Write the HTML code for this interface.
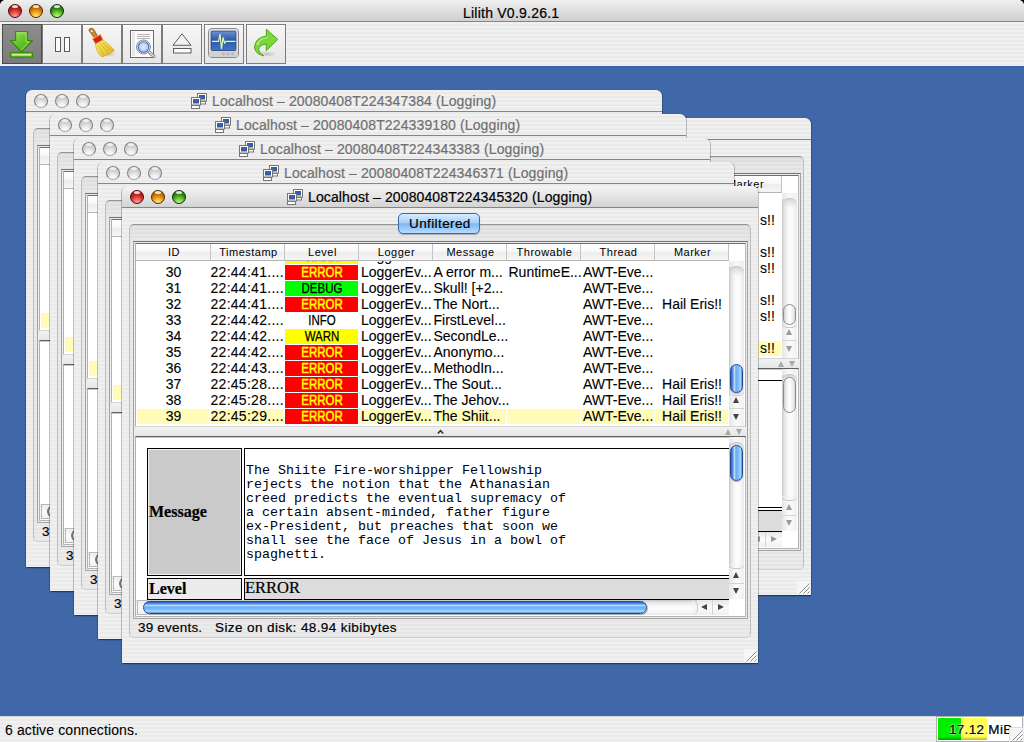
<!DOCTYPE html><html><head><meta charset="utf-8"><style>
*{box-sizing:border-box;margin:0;padding:0}
html,body{width:1024px;height:742px;overflow:hidden;background:#4068a8;font-family:'Liberation Sans',sans-serif;color:#000}
.a{position:absolute}
.stripe{background:repeating-linear-gradient(to bottom,#f0f0f0 0,#f0f0f0 2px,#eaeaea 2px,#eaeaea 4px)}
.t{position:absolute;white-space:pre;line-height:1;-webkit-text-stroke:0.2px currentColor}
.tl{position:absolute;width:14px;height:14px;border-radius:50%}
.tl.r{background:radial-gradient(ellipse 70% 75% at 50% 100%,#ffb0a8 0,#e8544c 55%,#b81c18 100%);border:1px solid #4a0808}
.tl.y{background:radial-gradient(ellipse 70% 75% at 50% 100%,#fff58a 0,#f4a828 55%,#c06a00 100%);border:1px solid #4a2a00}
.tl.g{background:radial-gradient(ellipse 70% 75% at 50% 100%,#d4ff98 0,#6cc830 55%,#2a8010 100%);border:1px solid #0a2a04}
.tl.i{background:radial-gradient(ellipse 70% 75% at 50% 100%,#ffffff 0,#f0f0f0 45%,#cdcdcd 100%);border:1px solid #7e7e7e;border-bottom-color:#a8a8a8}
.tl.i:after{content:'';position:absolute;left:3px;top:0px;width:6px;height:3px;border-radius:50%;background:rgba(255,255,255,0.7)}
.tl.r:after,.tl.y:after,.tl.g:after{content:'';position:absolute;left:3px;top:0px;width:6px;height:3px;border-radius:50%;background:rgba(255,255,255,0.8)}
.tb{position:absolute;top:24px;width:40px;height:40px;border:1px solid #7c7c7c;box-shadow:inset 0 1px 0 #fff;background:linear-gradient(#f6f6f6,#e6e6e6)}
.win{position:absolute;height:477px;border-radius:6px 6px 0 0;box-shadow:-1px 0 0 rgba(0,0,0,0.22),1px 0 0 rgba(0,0,0,0.22),0 1px 0 rgba(0,0,0,0.38),0 2px 1px rgba(0,0,0,0.12)}
.vtr{position:absolute;width:15px;background:linear-gradient(to right,#c4c4c4 0,#e2e2e2 2px,#f4f4f4 5px,#fdfdfd 8px,#f6f6f6 12px,#e8e8e8 15px)}
.htr{position:absolute;height:15px;background:linear-gradient(to bottom,#c4c4c4 0,#e2e2e2 2px,#f4f4f4 5px,#fdfdfd 8px,#f6f6f6 12px,#e8e8e8 15px)}
.kva{position:absolute;border-radius:7px;border:1px solid #23489a;background:linear-gradient(to right,#2a5fc4 0,#5d9be8 18%,#b8dcff 32%,#6eaaf0 45%,#7fc0fb 70%,#a8dcff 85%,#4f8ad8 100%);box-shadow:0 1px 1px rgba(0,0,0,0.3)}
.kha{position:absolute;border-radius:7px;border:1px solid #23489a;background:linear-gradient(to bottom,#2a5fc4 0,#5d9be8 18%,#b8dcff 32%,#6eaaf0 45%,#7fc0fb 70%,#a8dcff 85%,#4f8ad8 100%);box-shadow:1px 1px 1px rgba(0,0,0,0.3)}
.kvi{position:absolute;border-radius:7px;border:1px solid #8c8c8c;background:linear-gradient(to right,#d0d0d0 0,#f0f0f0 25%,#ffffff 50%,#f2f2f2 75%,#d8d8d8 100%)}
.khi{position:absolute;border-radius:7px;border:1px solid #8c8c8c;border-left:2px solid #707070;background:linear-gradient(to bottom,#d0d0d0 0,#f0f0f0 25%,#ffffff 50%,#f2f2f2 75%,#d8d8d8 100%)}
.arr{position:absolute;width:0;height:0;border-left:3.5px solid transparent;border-right:3.5px solid transparent}
.up{border-bottom:6px solid #444}
.in .up{border-bottom-color:#999}
.in .dn{border-top-color:#999}
.in .lf{border-right-color:#999}
.in .rt{border-left-color:#999}
.dn{border-top:6px solid #444}
.lf{position:absolute;width:0;height:0;border-top:3.5px solid transparent;border-bottom:3.5px solid transparent;border-right:6px solid #444}
.rt{position:absolute;width:0;height:0;border-top:3.5px solid transparent;border-bottom:3.5px solid transparent;border-left:6px solid #444}
.hd{position:absolute;top:60px;text-align:center;font-size:11px;letter-spacing:0.5px}
.rw{position:absolute;white-space:pre;line-height:1;font-size:14px;-webkit-text-stroke:0.1px currentColor}
</style></head><body>
<div class="a" style="left:0px;top:0px;width:1024px;height:21px;background:linear-gradient(#f0f0f0,#dedede 50%,#d0d0d0)"></div>
<svg class="a" style="left:0;top:0" width="1024" height="6"><path d="M0 0 H4 Q1 1 0 4 Z M1024 0 H1020 Q1023 1 1024 4 Z" fill="#000"/></svg>
<div class="a" style="left:0px;top:21px;width:1024px;height:1px;background:#858585"></div>
<div class="tl r" style="left:8px;top:4px"></div><div class="tl y" style="left:29px;top:4px"></div><div class="tl g" style="left:50px;top:4px"></div>
<div class="t" style="left:463px;top:5.5px;font-size:14px;letter-spacing:0.23px;">Lilith V0.9.26.1</div>
<div class="a" style="left:0px;top:22px;width:1024px;height:44px;background:repeating-linear-gradient(to bottom,#f0f0f0 0,#f0f0f0 2px,#eaeaea 2px,#eaeaea 4px)"></div>
<div class="a" style="left:0px;top:65px;width:1024px;height:1px;background:#f6f4ee"></div>
<div class="tb" style="left:2px;background:linear-gradient(#8c8c8c,#7c7c7c);border-color:#4a4a4a;box-shadow:none"></div>
<div class="tb" style="left:42px"></div>
<div class="tb" style="left:82px"></div>
<div class="tb" style="left:122px"></div>
<div class="tb" style="left:162px"></div>
<div class="tb" style="left:204px"></div>
<div class="tb" style="left:246px"></div>
<svg class="a" style="left:0;top:22px;z-index:3" width="300" height="44" viewBox="0 22 300 44">
<defs>
<linearGradient id="ga" x1="0" y1="0" x2="1" y2="1"><stop offset="0" stop-color="#a6e070"/><stop offset="0.5" stop-color="#62c424"/><stop offset="1" stop-color="#48a810"/></linearGradient>
<linearGradient id="scr" x1="0" y1="0" x2="0" y2="1"><stop offset="0" stop-color="#6f93cf"/><stop offset="0.45" stop-color="#2f5bab"/><stop offset="1" stop-color="#3f73c4"/></linearGradient>
<linearGradient id="bristle" x1="0" y1="0" x2="1" y2="1"><stop offset="0" stop-color="#fff27a"/><stop offset="1" stop-color="#d8b010"/></linearGradient>
<radialGradient id="lens" cx="0.5" cy="0.5" r="0.5"><stop offset="0" stop-color="#e8f0fa"/><stop offset="1" stop-color="#a8c4e8"/></radialGradient>
<radialGradient id="shadow" cx="0.5" cy="0.5" r="0.5"><stop offset="0" stop-color="#000" stop-opacity="0.18"/><stop offset="1" stop-color="#000" stop-opacity="0"/></radialGradient>
</defs>
<ellipse cx="21" cy="57" rx="12" ry="2.5" fill="url(#shadow)"/>
<path d="M15.5 31.5 H27.5 V40.5 H32.5 L21.5 52 L10.5 40.5 H15.5 Z" fill="url(#ga)" stroke="#3a8a0c" stroke-width="1.2" stroke-linejoin="round"/>
<path d="M17 33 H26 V42 H29 L21.5 50" fill="none" stroke="#c8f0a0" stroke-width="0.8" opacity="0.8"/>
<rect x="10.5" y="52.5" width="22" height="4.5" fill="#7ad03a" stroke="#3a8a0c" stroke-width="1.2"/>
<rect x="12" y="54" width="19" height="1.5" fill="#c8f0a0"/>
<!-- pause -->
<rect x="55.5" y="37.5" width="5" height="14" fill="#fbfbfb" stroke="#5a5a5a" stroke-width="1"/>
<rect x="64.5" y="37.5" width="5" height="14" fill="#fbfbfb" stroke="#5a5a5a" stroke-width="1"/>
<!-- broom -->
<ellipse cx="108" cy="54" rx="9" ry="3" fill="url(#shadow)"/>
<path d="M89 29.5 Q91 27 93.5 29 L98.5 37.5 L95.5 39.5 L90 32 Q88.5 30.8 89 29.5 Z" fill="#c68a36" stroke="#8a5a18" stroke-width="0.8"/>
<circle cx="91.8" cy="31.2" r="0.9" fill="#fff"/>
<path d="M92.5 39 L100.5 34.5 L103 40 L95.5 44 Z" fill="#d42020" stroke="#e8c020" stroke-width="0.9"/>
<path d="M95.5 44 L103 40 Q110 45 114.5 50.5 Q108 55 102 57 Q96 52 95.5 44 Z" fill="url(#bristle)" stroke="#c89a10" stroke-width="0.6"/>
<path d="M98 45 L104 55 M100 43 L108 53 M102 42 L111 51" stroke="#c8a010" stroke-width="0.6"/>
<!-- document + magnifier -->
<rect x="130.5" y="30.5" width="23" height="27" fill="#fafafa" stroke="#6a6a6a" stroke-width="1"/>
<rect x="132" y="32" width="3" height="24" fill="#e8e8e8"/>
<path d="M137 34.5 H150 M137 36.5 H150 M137 38.5 H150" stroke="#9a9a9a" stroke-width="0.7"/>
<path d="M148 51 L154 56.5" stroke="#8a8a8a" stroke-width="3.2" stroke-linecap="round"/>
<path d="M148 51 L154 56.5" stroke="#d8d8d8" stroke-width="1.5" stroke-linecap="round"/>
<circle cx="143.5" cy="47" r="7" fill="#e8e8e8" stroke="#8a8a8a" stroke-width="1"/>
<circle cx="143.5" cy="47" r="5.3" fill="url(#lens)" stroke="#3a78d0" stroke-width="1.1"/>
<!-- eject -->
<path d="M182 33.8 L191 45.3 H173 Z" fill="#f2f2f0" stroke="#5e5e5e" stroke-width="1" stroke-linejoin="round"/>
<rect x="173.5" y="48.5" width="17.5" height="4.5" fill="#fafafa" stroke="#5e5e5e" stroke-width="1"/>
<!-- monitor -->
<rect x="208.5" y="28.5" width="30" height="29" rx="3.5" fill="#e4e4e2" stroke="#8a8a88" stroke-width="1"/>
<rect x="210" y="30" width="27" height="20" rx="2" fill="#f8f8f8"/>
<rect x="211" y="31" width="25" height="19.5" rx="1" fill="url(#scr)" stroke="#23408a" stroke-width="0.8"/>
<path d="M212 41.3 H218.5 L220 34 L221.5 49 L223 37.5 L224.5 43 L226 41.3 H235.5" fill="none" stroke="#dcf8b0" stroke-width="1.2"/>
<rect x="209" y="51" width="29" height="6" rx="2" fill="#d2d2d0"/>
<circle cx="223.5" cy="54" r="1" fill="none" stroke="#999" stroke-width="0.6"/>
<circle cx="228" cy="54" r="1" fill="none" stroke="#999" stroke-width="0.6"/>
<circle cx="232.5" cy="54" r="1" fill="none" stroke="#999" stroke-width="0.6"/>
<!-- redo arrow -->
<ellipse cx="267" cy="54" rx="10" ry="3" fill="url(#shadow)"/>
<path d="M266.3 29.2 L277.8 39.4 L266.3 50.6 V44 Q259.5 44.5 258.6 49.5 Q259.5 53.5 263.8 55.8 Q255 54 254.5 47 Q255.5 37.5 266.3 36 Z" fill="#7ed63e" stroke="#4aa814" stroke-width="1" stroke-linejoin="round"/>
<path d="M267.5 37.5 Q259 38.5 257 45" fill="none" stroke="#c4f09a" stroke-width="1.2"/>
</svg>
<div class="a" style="left:0px;top:66px;width:1024px;height:650px;background:#4068a8;border-top:1px solid #3060a8"></div>
<div class="win stripe in" style="left:26px;top:90px;width:636px;z-index:1">
<div class="a" style="left:0px;top:21px;width:636px;height:1px;background:#858585"></div>
<div class="tl i" style="left:8px;top:4px"></div><div class="tl i" style="left:29px;top:4px"></div><div class="tl i" style="left:50px;top:4px"></div>
<svg class="a" style="left:165px;top:3px" width="16" height="16" viewBox="0 0 16 16"><rect x="6.5" y="0.5" width="9" height="7.5" fill="#fff" stroke="#777"/><rect x="8" y="2" width="6" height="4.5" fill="#3b5ea8"/><rect x="7.5" y="8.5" width="7" height="2.5" fill="#fff" stroke="#777"/><rect x="0.5" y="4.5" width="9" height="7.5" fill="#fff" stroke="#777"/><rect x="2" y="6" width="6" height="4.5" fill="#3b5ea8"/><rect x="0.5" y="12.5" width="8" height="3" fill="#fff" stroke="#777"/></svg>
<div class="t" style="left:186px;top:4px;font-size:14px;letter-spacing:0.12px;color:#707070;">Localhost – 20080408T224347384 (Logging)</div>
<div class="a" style="left:7px;top:38px;width:622px;height:414px;border:1px solid #bdbdbd;border-top-color:#969696;border-bottom-color:#d0d0d0;border-radius:5px;background:linear-gradient(rgba(0,0,0,0.06),rgba(0,0,0,0.02) 20px,rgba(0,0,0,0.02));box-shadow:inset 0 1px 0 rgba(0,0,0,0.05)"></div>
<div class="a" style="left:276px;top:27px;width:82px;height:21px;border:1px solid #8a8a8a;border-radius:5px;background:linear-gradient(#fdfdfd,#ececec 50%,#dedede 52%,#f4f4f4)"></div>
<div class="t" style="left:287px;top:30.5px;font-size:13.5px;letter-spacing:0.4px;">Unfiltered</div>
<div class="a" style="left:11px;top:55px;width:615px;height:378px;border:1px solid #a4a4a4;border-top-color:#747474;background:#ececec"></div>
<div class="a" style="left:13px;top:57px;width:611px;height:184px;border:1px solid #b4b4b4;border-top:1px solid #6e6e6e;border-bottom-color:#d4d4d4;background:#fff"></div>
<div class="a" style="left:14px;top:58px;width:593px;height:16px;background:linear-gradient(#ffffff,#f8f8f8 45%,#ededed 55%,#f6f6f6)"></div>
<div class="a" style="left:14px;top:74px;width:593px;height:1px;background:#b4b4b4"></div>
<div class="hd" style="left:15px;width:74px">ID</div>
<div class="a" style="left:88px;top:58px;width:1px;height:17px;background:#c4c4c4"></div>
<div class="hd" style="left:90px;width:73px">Timestamp</div>
<div class="a" style="left:162px;top:58px;width:1px;height:17px;background:#c4c4c4"></div>
<div class="hd" style="left:164px;width:73px">Level</div>
<div class="a" style="left:236px;top:58px;width:1px;height:17px;background:#c4c4c4"></div>
<div class="hd" style="left:238px;width:73px">Logger</div>
<div class="a" style="left:310px;top:58px;width:1px;height:17px;background:#c4c4c4"></div>
<div class="hd" style="left:312px;width:73px">Message</div>
<div class="a" style="left:384px;top:58px;width:1px;height:17px;background:#c4c4c4"></div>
<div class="hd" style="left:386px;width:73px">Throwable</div>
<div class="a" style="left:458px;top:58px;width:1px;height:17px;background:#c4c4c4"></div>
<div class="hd" style="left:460px;width:73px">Thread</div>
<div class="a" style="left:532px;top:58px;width:1px;height:17px;background:#c4c4c4"></div>
<div class="hd" style="left:534px;width:73px">Marker</div>
<div class="a" style="left:606px;top:58px;width:1px;height:17px;background:#c4c4c4"></div>
<div class="a" style="left:14px;top:75px;width:593px;height:165px;overflow:hidden">
<div class="rw" style="left:0px;top:-12px;width:75px;text-align:center">29</div>
<div class="rw" style="left:74.5px;top:-12px;letter-spacing:0.28px">22:44:41....</div>
<div class="a" style="left:149px;top:-12px;width:73px;height:15px;background:#ffff00"></div>
<div class="rw" style="left:149px;top:-12px;width:74px;text-align:center;color:#000;transform:scaleX(0.82);-webkit-text-stroke:0.25px #000">WARN</div>
<div class="rw" style="left:225px;top:-12px;">LoggerEv...</div>
<div class="rw" style="left:297.5px;top:-12px;">ThirdLev...</div>
<div class="rw" style="left:447px;top:-12px;">AWT-Eve...</div>
<div class="rw" style="left:0px;top:4px;width:75px;text-align:center">30</div>
<div class="rw" style="left:74.5px;top:4px;letter-spacing:0.28px">22:44:41....</div>
<div class="a" style="left:149px;top:4px;width:73px;height:15px;background:#ff0000"></div>
<div class="rw" style="left:149px;top:4px;width:74px;text-align:center;color:#ffff00;transform:scaleX(0.82);-webkit-text-stroke:0.5px #ffff00">ERROR</div>
<div class="rw" style="left:225px;top:4px;">LoggerEv...</div>
<div class="rw" style="left:297.5px;top:4px;">A error m...</div>
<div class="rw" style="left:372.5px;top:4px;">RuntimeE...</div>
<div class="rw" style="left:447px;top:4px;">AWT-Eve...</div>
<div class="rw" style="left:0px;top:20px;width:75px;text-align:center">31</div>
<div class="rw" style="left:74.5px;top:20px;letter-spacing:0.28px">22:44:41....</div>
<div class="a" style="left:149px;top:20px;width:73px;height:15px;background:#00ff00"></div>
<div class="rw" style="left:149px;top:20px;width:74px;text-align:center;color:#000;transform:scaleX(0.82);-webkit-text-stroke:0.25px #000">DEBUG</div>
<div class="rw" style="left:225px;top:20px;">LoggerEv...</div>
<div class="rw" style="left:297.5px;top:20px;">Skull! [+2...</div>
<div class="rw" style="left:447px;top:20px;">AWT-Eve...</div>
<div class="rw" style="left:0px;top:36px;width:75px;text-align:center">32</div>
<div class="rw" style="left:74.5px;top:36px;letter-spacing:0.28px">22:44:41....</div>
<div class="a" style="left:149px;top:36px;width:73px;height:15px;background:#ff0000"></div>
<div class="rw" style="left:149px;top:36px;width:74px;text-align:center;color:#ffff00;transform:scaleX(0.82);-webkit-text-stroke:0.5px #ffff00">ERROR</div>
<div class="rw" style="left:225px;top:36px;">LoggerEv...</div>
<div class="rw" style="left:297.5px;top:36px;">The Nort...</div>
<div class="rw" style="left:447px;top:36px;">AWT-Eve...</div>
<div class="rw" style="left:519px;top:36px;width:74px;text-align:center">Hail Eris!!</div>
<div class="rw" style="left:0px;top:52px;width:75px;text-align:center">33</div>
<div class="rw" style="left:74.5px;top:52px;letter-spacing:0.28px">22:44:42....</div>
<div class="rw" style="left:149px;top:52px;width:74px;text-align:center;color:#000;transform:scaleX(0.82);-webkit-text-stroke:0.25px #000">INFO</div>
<div class="rw" style="left:225px;top:52px;">LoggerEv...</div>
<div class="rw" style="left:297.5px;top:52px;">FirstLevel...</div>
<div class="rw" style="left:447px;top:52px;">AWT-Eve...</div>
<div class="rw" style="left:0px;top:68px;width:75px;text-align:center">34</div>
<div class="rw" style="left:74.5px;top:68px;letter-spacing:0.28px">22:44:42....</div>
<div class="a" style="left:149px;top:68px;width:73px;height:15px;background:#ffff00"></div>
<div class="rw" style="left:149px;top:68px;width:74px;text-align:center;color:#000;transform:scaleX(0.82);-webkit-text-stroke:0.25px #000">WARN</div>
<div class="rw" style="left:225px;top:68px;">LoggerEv...</div>
<div class="rw" style="left:297.5px;top:68px;">SecondLe...</div>
<div class="rw" style="left:447px;top:68px;">AWT-Eve...</div>
<div class="rw" style="left:0px;top:84px;width:75px;text-align:center">35</div>
<div class="rw" style="left:74.5px;top:84px;letter-spacing:0.28px">22:44:42....</div>
<div class="a" style="left:149px;top:84px;width:73px;height:15px;background:#ff0000"></div>
<div class="rw" style="left:149px;top:84px;width:74px;text-align:center;color:#ffff00;transform:scaleX(0.82);-webkit-text-stroke:0.5px #ffff00">ERROR</div>
<div class="rw" style="left:225px;top:84px;">LoggerEv...</div>
<div class="rw" style="left:297.5px;top:84px;">Anonymo...</div>
<div class="rw" style="left:447px;top:84px;">AWT-Eve...</div>
<div class="rw" style="left:0px;top:100px;width:75px;text-align:center">36</div>
<div class="rw" style="left:74.5px;top:100px;letter-spacing:0.28px">22:44:43....</div>
<div class="a" style="left:149px;top:100px;width:73px;height:15px;background:#ff0000"></div>
<div class="rw" style="left:149px;top:100px;width:74px;text-align:center;color:#ffff00;transform:scaleX(0.82);-webkit-text-stroke:0.5px #ffff00">ERROR</div>
<div class="rw" style="left:225px;top:100px;">LoggerEv...</div>
<div class="rw" style="left:297.5px;top:100px;">MethodIn...</div>
<div class="rw" style="left:447px;top:100px;">AWT-Eve...</div>
<div class="rw" style="left:0px;top:116px;width:75px;text-align:center">37</div>
<div class="rw" style="left:74.5px;top:116px;letter-spacing:0.28px">22:45:28....</div>
<div class="a" style="left:149px;top:116px;width:73px;height:15px;background:#ff0000"></div>
<div class="rw" style="left:149px;top:116px;width:74px;text-align:center;color:#ffff00;transform:scaleX(0.82);-webkit-text-stroke:0.5px #ffff00">ERROR</div>
<div class="rw" style="left:225px;top:116px;">LoggerEv...</div>
<div class="rw" style="left:297.5px;top:116px;">The Sout...</div>
<div class="rw" style="left:447px;top:116px;">AWT-Eve...</div>
<div class="rw" style="left:519px;top:116px;width:74px;text-align:center">Hail Eris!!</div>
<div class="rw" style="left:0px;top:132px;width:75px;text-align:center">38</div>
<div class="rw" style="left:74.5px;top:132px;letter-spacing:0.28px">22:45:28....</div>
<div class="a" style="left:149px;top:132px;width:73px;height:15px;background:#ff0000"></div>
<div class="rw" style="left:149px;top:132px;width:74px;text-align:center;color:#ffff00;transform:scaleX(0.82);-webkit-text-stroke:0.5px #ffff00">ERROR</div>
<div class="rw" style="left:225px;top:132px;">LoggerEv...</div>
<div class="rw" style="left:297.5px;top:132px;">The Jehov...</div>
<div class="rw" style="left:447px;top:132px;">AWT-Eve...</div>
<div class="rw" style="left:519px;top:132px;width:74px;text-align:center">Hail Eris!!</div>
<div class="a" style="left:1px;top:148px;width:73px;height:15px;background:#fffcb8"></div>
<div class="a" style="left:75px;top:148px;width:73px;height:15px;background:#fffcb8"></div>
<div class="a" style="left:149px;top:148px;width:73px;height:15px;background:#fffcb8"></div>
<div class="a" style="left:223px;top:148px;width:73px;height:15px;background:#fffcb8"></div>
<div class="a" style="left:297px;top:148px;width:73px;height:15px;background:#fffcb8"></div>
<div class="a" style="left:371px;top:148px;width:73px;height:15px;background:#fffcb8"></div>
<div class="a" style="left:445px;top:148px;width:73px;height:15px;background:#fffcb8"></div>
<div class="a" style="left:519px;top:148px;width:73px;height:15px;background:#fffcb8"></div>
<div class="rw" style="left:0px;top:148px;width:75px;text-align:center">39</div>
<div class="rw" style="left:74.5px;top:148px;letter-spacing:0.28px">22:45:29....</div>
<div class="a" style="left:149px;top:148px;width:73px;height:15px;background:#ff0000"></div>
<div class="rw" style="left:149px;top:148px;width:74px;text-align:center;color:#ffff00;transform:scaleX(0.82);-webkit-text-stroke:0.5px #ffff00">ERROR</div>
<div class="rw" style="left:225px;top:148px;">LoggerEv...</div>
<div class="rw" style="left:297.5px;top:148px;">The Shiit...</div>
<div class="rw" style="left:447px;top:148px;">AWT-Eve...</div>
<div class="rw" style="left:519px;top:148px;width:74px;text-align:center">Hail Eris!!</div>
</div>
<div class="vtr" style="left:607px;top:75px;height:165px"></div>
<div class="a" style="left:607px;top:75px;width:15px;height:6px;background:linear-gradient(to right,#e8e8e8,#f8f8f8 50%,#eeeeee)"></div>
<div class="a" style="left:607px;top:80px;width:15px;height:10px;border-radius:7px 7px 0 0;border-top:1px solid #c4c4c4;background:linear-gradient(to bottom,#d8d8d8,rgba(255,255,255,0))"></div>
<div class="a" style="left:607px;top:209px;width:15px;height:31px;background:linear-gradient(to right,#e6e6e6,#fbfbfb 50%,#f0f0f0)"></div>
<div class="a" style="left:607px;top:205px;width:15px;height:5px;border-radius:0 0 7px 7px;border-bottom:1px solid #c8c8c8;background:linear-gradient(to right,#e2e2e2,#fafafa 50%,#ececec)"></div>
<div class="a" style="left:607px;top:222px;width:15px;height:1px;background:#d4d4d4"></div>
<div class="arr up" style="left:611px;top:211px"></div>
<div class="arr dn" style="left:611px;top:228px"></div>
<div class="kvi" style="left:608px;top:178px;width:13px;height:29px"></div>
<div class="a" style="left:13px;top:241px;width:611px;height:9px;background:linear-gradient(#f2f2f2,#e6e6e6)"></div>
<svg class="a" style="left:314px;top:241px" width="10" height="9"><path d="M1.8 6.5 L4.5 3.6 L7.2 6.5" fill="none" stroke="#333" stroke-width="1.6"/></svg>
<div class="arr up" style="left:603px;top:243px;border-bottom:6px solid #a8a8a8"></div>
<div class="arr dn" style="left:614px;top:243px;border-top:6px solid #a8a8a8"></div>
<div class="a" style="left:13px;top:250px;width:611px;height:181px;border:1px solid #b4b4b4;border-top:1px solid #5e5e5e;background:#fff;box-shadow:inset 0 1px 0 #c8c8c8"></div>
<div class="a" style="left:25px;top:262px;width:95px;height:128px;border:1px solid #000;background:#cacaca;box-shadow:inset 0 0 0 1px #f0f0f0"></div>
<div class="t" style="left:27px;top:317.5px;font-size:16px;font-weight:700;font-family:'Liberation Serif', serif;">Message</div>
<div class="a" style="left:122px;top:262px;width:485px;height:128px;border:1px solid #000;border-right:0;background:#fff"></div>
<div class="t" style="left:124px;top:277.7px;font-size:13.33px;font-family:'Liberation Mono', monospace;-webkit-text-stroke:0">The Shiite Fire-worshipper Fellowship</div>
<div class="t" style="left:124px;top:291.7px;font-size:13.33px;font-family:'Liberation Mono', monospace;-webkit-text-stroke:0">rejects the notion that the Athanasian</div>
<div class="t" style="left:124px;top:305.7px;font-size:13.33px;font-family:'Liberation Mono', monospace;-webkit-text-stroke:0">creed predicts the eventual supremacy of</div>
<div class="t" style="left:124px;top:319.7px;font-size:13.33px;font-family:'Liberation Mono', monospace;-webkit-text-stroke:0">a certain absent-minded, father figure</div>
<div class="t" style="left:124px;top:333.7px;font-size:13.33px;font-family:'Liberation Mono', monospace;-webkit-text-stroke:0">ex-President, but preaches that soon we</div>
<div class="t" style="left:124px;top:347.7px;font-size:13.33px;font-family:'Liberation Mono', monospace;-webkit-text-stroke:0">shall see the face of Jesus in a bowl of</div>
<div class="t" style="left:124px;top:361.7px;font-size:13.33px;font-family:'Liberation Mono', monospace;-webkit-text-stroke:0">spaghetti.</div>
<div class="a" style="left:25px;top:392px;width:95px;height:22px;border:1px solid #000;background:#ececec"></div>
<div class="t" style="left:27px;top:395px;font-size:16px;font-weight:700;font-family:'Liberation Serif', serif;">Level</div>
<div class="a" style="left:122px;top:392px;width:485px;height:22px;border:1px solid #000;border-right:0;background:#dcdcdc"></div>
<div class="t" style="left:123px;top:394px;font-size:16.5px;font-family:'Liberation Serif', serif;">ERROR</div>
<div class="vtr" style="left:607px;top:251px;height:162px"></div>
<div class="a" style="left:607px;top:251px;width:15px;height:6px;background:linear-gradient(to right,#e8e8e8,#f8f8f8 50%,#eeeeee)"></div>
<div class="a" style="left:607px;top:256px;width:15px;height:10px;border-radius:7px 7px 0 0;border-top:1px solid #c4c4c4;background:linear-gradient(to bottom,#d8d8d8,rgba(255,255,255,0))"></div>
<div class="a" style="left:607px;top:382px;width:15px;height:31px;background:linear-gradient(to right,#e6e6e6,#fbfbfb 50%,#f0f0f0)"></div>
<div class="a" style="left:607px;top:378px;width:15px;height:5px;border-radius:0 0 7px 7px;border-bottom:1px solid #c8c8c8;background:linear-gradient(to right,#e2e2e2,#fafafa 50%,#ececec)"></div>
<div class="a" style="left:607px;top:397px;width:15px;height:1px;background:#d4d4d4"></div>
<div class="arr up" style="left:611px;top:386px"></div>
<div class="arr dn" style="left:611px;top:402px"></div>
<div class="kvi" style="left:608px;top:259px;width:13px;height:36px"></div>
<div class="htr" style="left:14px;top:414px;width:593px"></div>
<div class="a" style="left:14px;top:414px;width:6px;height:15px;background:linear-gradient(to bottom,#e8e8e8,#f8f8f8 50%,#eeeeee)"></div>
<div class="a" style="left:575px;top:414px;width:32px;height:15px;background:linear-gradient(to bottom,#e6e6e6,#fbfbfb 50%,#f0f0f0)"></div>
<div class="a" style="left:570px;top:414px;width:6px;height:15px;border-radius:0 7px 7px 0;border-right:1px solid #c8c8c8;background:linear-gradient(to bottom,#e2e2e2,#fafafa 50%,#ececec)"></div>
<div class="a" style="left:590px;top:414px;width:1px;height:15px;background:#d4d4d4"></div>
<div class="lf" style="left:579px;top:418px"></div>
<div class="rt" style="left:596px;top:418px"></div>
<div class="a" style="left:15px;top:414px;width:10px;height:15px;border:1px solid #b8b8b8;border-right:0;background:linear-gradient(to bottom,#ececec,#fafafa 50%,#f0f0f0)"></div>
<div class="khi" style="left:21px;top:415px;width:504px;height:13px"></div>
<div class="a" style="left:607px;top:414px;width:16px;height:15px;background:#fff"></div>
<div class="t" style="left:16px;top:435px;font-size:13.5px;letter-spacing:0.2px;">39 events.</div>
<div class="t" style="left:93px;top:435px;font-size:13.5px;letter-spacing:0.4px;">Size on disk: 48.94 kibibytes</div>
<svg class="a" style="left:622px;top:463px" width="13" height="13" viewBox="0 0 13 13"><rect x="0" y="0" width="13" height="13" fill="#f6f6f6"/><path d="M2.5 12.5 L12.5 2.5 M6.5 12.5 L12.5 6.5 M10.5 12.5 L12.5 10.5" stroke="#8a8a8a" stroke-width="1"/><path d="M3.5 12.5 L12.5 3.5 M7.5 12.5 L12.5 7.5" stroke="#fff" stroke-width="1"/></svg>
</div>
<div class="win stripe in" style="left:175px;top:118px;width:636px;z-index:2">
<div class="a" style="left:0px;top:21px;width:636px;height:1px;background:#858585"></div>
<div class="tl i" style="left:8px;top:4px"></div><div class="tl i" style="left:29px;top:4px"></div><div class="tl i" style="left:50px;top:4px"></div>
<svg class="a" style="left:165px;top:3px" width="16" height="16" viewBox="0 0 16 16"><rect x="6.5" y="0.5" width="9" height="7.5" fill="#fff" stroke="#777"/><rect x="8" y="2" width="6" height="4.5" fill="#3b5ea8"/><rect x="7.5" y="8.5" width="7" height="2.5" fill="#fff" stroke="#777"/><rect x="0.5" y="4.5" width="9" height="7.5" fill="#fff" stroke="#777"/><rect x="2" y="6" width="6" height="4.5" fill="#3b5ea8"/><rect x="0.5" y="12.5" width="8" height="3" fill="#fff" stroke="#777"/></svg>
<div class="t" style="left:186px;top:4px;font-size:14px;letter-spacing:0.12px;color:#707070;">Localhost – 20080408T224350000 (Logging)</div>
<div class="a" style="left:7px;top:38px;width:622px;height:414px;border:1px solid #bdbdbd;border-top-color:#969696;border-bottom-color:#d0d0d0;border-radius:5px;background:linear-gradient(rgba(0,0,0,0.06),rgba(0,0,0,0.02) 20px,rgba(0,0,0,0.02));box-shadow:inset 0 1px 0 rgba(0,0,0,0.05)"></div>
<div class="a" style="left:276px;top:27px;width:82px;height:21px;border:1px solid #8a8a8a;border-radius:5px;background:linear-gradient(#fdfdfd,#ececec 50%,#dedede 52%,#f4f4f4)"></div>
<div class="t" style="left:287px;top:30.5px;font-size:13.5px;letter-spacing:0.4px;">Unfiltered</div>
<div class="a" style="left:11px;top:55px;width:615px;height:378px;border:1px solid #a4a4a4;border-top-color:#747474;background:#ececec"></div>
<div class="a" style="left:13px;top:57px;width:611px;height:184px;border:1px solid #b4b4b4;border-top:1px solid #6e6e6e;border-bottom-color:#d4d4d4;background:#fff"></div>
<div class="a" style="left:14px;top:58px;width:593px;height:16px;background:linear-gradient(#ffffff,#f8f8f8 45%,#ededed 55%,#f6f6f6)"></div>
<div class="a" style="left:14px;top:74px;width:593px;height:1px;background:#b4b4b4"></div>
<div class="hd" style="left:15px;width:74px">ID</div>
<div class="a" style="left:88px;top:58px;width:1px;height:17px;background:#c4c4c4"></div>
<div class="hd" style="left:90px;width:73px">Timestamp</div>
<div class="a" style="left:162px;top:58px;width:1px;height:17px;background:#c4c4c4"></div>
<div class="hd" style="left:164px;width:73px">Level</div>
<div class="a" style="left:236px;top:58px;width:1px;height:17px;background:#c4c4c4"></div>
<div class="hd" style="left:238px;width:73px">Logger</div>
<div class="a" style="left:310px;top:58px;width:1px;height:17px;background:#c4c4c4"></div>
<div class="hd" style="left:312px;width:73px">Message</div>
<div class="a" style="left:384px;top:58px;width:1px;height:17px;background:#c4c4c4"></div>
<div class="hd" style="left:386px;width:73px">Throwable</div>
<div class="a" style="left:458px;top:58px;width:1px;height:17px;background:#c4c4c4"></div>
<div class="hd" style="left:460px;width:73px">Thread</div>
<div class="a" style="left:532px;top:58px;width:1px;height:17px;background:#c4c4c4"></div>
<div class="hd" style="left:534px;width:73px">Marker</div>
<div class="a" style="left:606px;top:58px;width:1px;height:17px;background:#c4c4c4"></div>
<div class="a" style="left:14px;top:75px;width:593px;height:165px;overflow:hidden">
<div class="rw" style="left:0px;top:-12px;width:75px;text-align:center">29</div>
<div class="rw" style="left:74.5px;top:-12px;letter-spacing:0.28px">22:44:41....</div>
<div class="a" style="left:149px;top:-12px;width:73px;height:15px;background:#ffff00"></div>
<div class="rw" style="left:149px;top:-12px;width:74px;text-align:center;color:#000;transform:scaleX(0.82);-webkit-text-stroke:0.25px #000">WARN</div>
<div class="rw" style="left:225px;top:-12px;">LoggerEv...</div>
<div class="rw" style="left:297.5px;top:-12px;">ThirdLev...</div>
<div class="rw" style="left:447px;top:-12px;">AWT-Eve...</div>
<div class="rw" style="left:0px;top:4px;width:75px;text-align:center">30</div>
<div class="rw" style="left:74.5px;top:4px;letter-spacing:0.28px">22:44:41....</div>
<div class="a" style="left:149px;top:4px;width:73px;height:15px;background:#ff0000"></div>
<div class="rw" style="left:149px;top:4px;width:74px;text-align:center;color:#ffff00;transform:scaleX(0.82);-webkit-text-stroke:0.5px #ffff00">ERROR</div>
<div class="rw" style="left:225px;top:4px;">LoggerEv...</div>
<div class="rw" style="left:297.5px;top:4px;">A error m...</div>
<div class="rw" style="left:372.5px;top:4px;">RuntimeE...</div>
<div class="rw" style="left:447px;top:4px;">AWT-Eve...</div>
<div class="rw" style="left:0px;top:20px;width:75px;text-align:center">31</div>
<div class="rw" style="left:74.5px;top:20px;letter-spacing:0.28px">22:44:41....</div>
<div class="a" style="left:149px;top:20px;width:73px;height:15px;background:#00ff00"></div>
<div class="rw" style="left:149px;top:20px;width:74px;text-align:center;color:#000;transform:scaleX(0.82);-webkit-text-stroke:0.25px #000">DEBUG</div>
<div class="rw" style="left:225px;top:20px;">LoggerEv...</div>
<div class="rw" style="left:297.5px;top:20px;">Skull! [+2...</div>
<div class="rw" style="left:447px;top:20px;">AWT-Eve...</div>
<div class="rw" style="left:571px;top:20px">s!!</div>
<div class="rw" style="left:0px;top:36px;width:75px;text-align:center">32</div>
<div class="rw" style="left:74.5px;top:36px;letter-spacing:0.28px">22:44:41....</div>
<div class="a" style="left:149px;top:36px;width:73px;height:15px;background:#ff0000"></div>
<div class="rw" style="left:149px;top:36px;width:74px;text-align:center;color:#ffff00;transform:scaleX(0.82);-webkit-text-stroke:0.5px #ffff00">ERROR</div>
<div class="rw" style="left:225px;top:36px;">LoggerEv...</div>
<div class="rw" style="left:297.5px;top:36px;">The Nort...</div>
<div class="rw" style="left:447px;top:36px;">AWT-Eve...</div>
<div class="rw" style="left:0px;top:52px;width:75px;text-align:center">33</div>
<div class="rw" style="left:74.5px;top:52px;letter-spacing:0.28px">22:44:42....</div>
<div class="rw" style="left:149px;top:52px;width:74px;text-align:center;color:#000;transform:scaleX(0.82);-webkit-text-stroke:0.25px #000">INFO</div>
<div class="rw" style="left:225px;top:52px;">LoggerEv...</div>
<div class="rw" style="left:297.5px;top:52px;">FirstLevel...</div>
<div class="rw" style="left:447px;top:52px;">AWT-Eve...</div>
<div class="rw" style="left:571px;top:52px">s!!</div>
<div class="rw" style="left:0px;top:68px;width:75px;text-align:center">34</div>
<div class="rw" style="left:74.5px;top:68px;letter-spacing:0.28px">22:44:42....</div>
<div class="a" style="left:149px;top:68px;width:73px;height:15px;background:#ffff00"></div>
<div class="rw" style="left:149px;top:68px;width:74px;text-align:center;color:#000;transform:scaleX(0.82);-webkit-text-stroke:0.25px #000">WARN</div>
<div class="rw" style="left:225px;top:68px;">LoggerEv...</div>
<div class="rw" style="left:297.5px;top:68px;">SecondLe...</div>
<div class="rw" style="left:447px;top:68px;">AWT-Eve...</div>
<div class="rw" style="left:571px;top:68px">s!!</div>
<div class="rw" style="left:0px;top:84px;width:75px;text-align:center">35</div>
<div class="rw" style="left:74.5px;top:84px;letter-spacing:0.28px">22:44:42....</div>
<div class="a" style="left:149px;top:84px;width:73px;height:15px;background:#ff0000"></div>
<div class="rw" style="left:149px;top:84px;width:74px;text-align:center;color:#ffff00;transform:scaleX(0.82);-webkit-text-stroke:0.5px #ffff00">ERROR</div>
<div class="rw" style="left:225px;top:84px;">LoggerEv...</div>
<div class="rw" style="left:297.5px;top:84px;">Anonymo...</div>
<div class="rw" style="left:447px;top:84px;">AWT-Eve...</div>
<div class="rw" style="left:0px;top:100px;width:75px;text-align:center">36</div>
<div class="rw" style="left:74.5px;top:100px;letter-spacing:0.28px">22:44:43....</div>
<div class="a" style="left:149px;top:100px;width:73px;height:15px;background:#ff0000"></div>
<div class="rw" style="left:149px;top:100px;width:74px;text-align:center;color:#ffff00;transform:scaleX(0.82);-webkit-text-stroke:0.5px #ffff00">ERROR</div>
<div class="rw" style="left:225px;top:100px;">LoggerEv...</div>
<div class="rw" style="left:297.5px;top:100px;">MethodIn...</div>
<div class="rw" style="left:447px;top:100px;">AWT-Eve...</div>
<div class="rw" style="left:571px;top:100px">s!!</div>
<div class="rw" style="left:0px;top:116px;width:75px;text-align:center">37</div>
<div class="rw" style="left:74.5px;top:116px;letter-spacing:0.28px">22:45:28....</div>
<div class="a" style="left:149px;top:116px;width:73px;height:15px;background:#ff0000"></div>
<div class="rw" style="left:149px;top:116px;width:74px;text-align:center;color:#ffff00;transform:scaleX(0.82);-webkit-text-stroke:0.5px #ffff00">ERROR</div>
<div class="rw" style="left:225px;top:116px;">LoggerEv...</div>
<div class="rw" style="left:297.5px;top:116px;">The Sout...</div>
<div class="rw" style="left:447px;top:116px;">AWT-Eve...</div>
<div class="rw" style="left:571px;top:116px">s!!</div>
<div class="rw" style="left:0px;top:132px;width:75px;text-align:center">38</div>
<div class="rw" style="left:74.5px;top:132px;letter-spacing:0.28px">22:45:28....</div>
<div class="a" style="left:149px;top:132px;width:73px;height:15px;background:#ff0000"></div>
<div class="rw" style="left:149px;top:132px;width:74px;text-align:center;color:#ffff00;transform:scaleX(0.82);-webkit-text-stroke:0.5px #ffff00">ERROR</div>
<div class="rw" style="left:225px;top:132px;">LoggerEv...</div>
<div class="rw" style="left:297.5px;top:132px;">The Jehov...</div>
<div class="rw" style="left:447px;top:132px;">AWT-Eve...</div>
<div class="a" style="left:1px;top:148px;width:73px;height:15px;background:#fffcb8"></div>
<div class="a" style="left:75px;top:148px;width:73px;height:15px;background:#fffcb8"></div>
<div class="a" style="left:149px;top:148px;width:73px;height:15px;background:#fffcb8"></div>
<div class="a" style="left:223px;top:148px;width:73px;height:15px;background:#fffcb8"></div>
<div class="a" style="left:297px;top:148px;width:73px;height:15px;background:#fffcb8"></div>
<div class="a" style="left:371px;top:148px;width:73px;height:15px;background:#fffcb8"></div>
<div class="a" style="left:445px;top:148px;width:73px;height:15px;background:#fffcb8"></div>
<div class="a" style="left:519px;top:148px;width:73px;height:15px;background:#fffcb8"></div>
<div class="rw" style="left:0px;top:148px;width:75px;text-align:center">39</div>
<div class="rw" style="left:74.5px;top:148px;letter-spacing:0.28px">22:45:29....</div>
<div class="a" style="left:149px;top:148px;width:73px;height:15px;background:#ff0000"></div>
<div class="rw" style="left:149px;top:148px;width:74px;text-align:center;color:#ffff00;transform:scaleX(0.82);-webkit-text-stroke:0.5px #ffff00">ERROR</div>
<div class="rw" style="left:225px;top:148px;">LoggerEv...</div>
<div class="rw" style="left:297.5px;top:148px;">The Shiit...</div>
<div class="rw" style="left:447px;top:148px;">AWT-Eve...</div>
<div class="rw" style="left:571px;top:148px">s!!</div>
</div>
<div class="vtr" style="left:607px;top:75px;height:165px"></div>
<div class="a" style="left:607px;top:75px;width:15px;height:6px;background:linear-gradient(to right,#e8e8e8,#f8f8f8 50%,#eeeeee)"></div>
<div class="a" style="left:607px;top:80px;width:15px;height:10px;border-radius:7px 7px 0 0;border-top:1px solid #c4c4c4;background:linear-gradient(to bottom,#d8d8d8,rgba(255,255,255,0))"></div>
<div class="a" style="left:607px;top:209px;width:15px;height:31px;background:linear-gradient(to right,#e6e6e6,#fbfbfb 50%,#f0f0f0)"></div>
<div class="a" style="left:607px;top:205px;width:15px;height:5px;border-radius:0 0 7px 7px;border-bottom:1px solid #c8c8c8;background:linear-gradient(to right,#e2e2e2,#fafafa 50%,#ececec)"></div>
<div class="a" style="left:607px;top:222px;width:15px;height:1px;background:#d4d4d4"></div>
<div class="arr up" style="left:611px;top:211px"></div>
<div class="arr dn" style="left:611px;top:228px"></div>
<div class="kvi" style="left:608px;top:186px;width:13px;height:21px"></div>
<div class="a" style="left:13px;top:241px;width:611px;height:9px;background:linear-gradient(#f2f2f2,#e6e6e6)"></div>
<svg class="a" style="left:314px;top:241px" width="10" height="9"><path d="M1.8 6.5 L4.5 3.6 L7.2 6.5" fill="none" stroke="#333" stroke-width="1.6"/></svg>
<div class="arr up" style="left:603px;top:243px;border-bottom:6px solid #a8a8a8"></div>
<div class="arr dn" style="left:614px;top:243px;border-top:6px solid #a8a8a8"></div>
<div class="a" style="left:13px;top:250px;width:611px;height:181px;border:1px solid #b4b4b4;border-top:1px solid #5e5e5e;background:#fff;box-shadow:inset 0 1px 0 #c8c8c8"></div>
<div class="a" style="left:25px;top:262px;width:95px;height:128px;border:1px solid #000;background:#cacaca;box-shadow:inset 0 0 0 1px #f0f0f0"></div>
<div class="t" style="left:27px;top:317.5px;font-size:16px;font-weight:700;font-family:'Liberation Serif', serif;">Message</div>
<div class="a" style="left:122px;top:262px;width:485px;height:128px;border:1px solid #000;border-right:0;background:#fff"></div>
<div class="t" style="left:124px;top:277.7px;font-size:13.33px;font-family:'Liberation Mono', monospace;-webkit-text-stroke:0">The Shiite Fire-worshipper Fellowship</div>
<div class="t" style="left:124px;top:291.7px;font-size:13.33px;font-family:'Liberation Mono', monospace;-webkit-text-stroke:0">rejects the notion that the Athanasian</div>
<div class="t" style="left:124px;top:305.7px;font-size:13.33px;font-family:'Liberation Mono', monospace;-webkit-text-stroke:0">creed predicts the eventual supremacy of</div>
<div class="t" style="left:124px;top:319.7px;font-size:13.33px;font-family:'Liberation Mono', monospace;-webkit-text-stroke:0">a certain absent-minded, father figure</div>
<div class="t" style="left:124px;top:333.7px;font-size:13.33px;font-family:'Liberation Mono', monospace;-webkit-text-stroke:0">ex-President, but preaches that soon we</div>
<div class="t" style="left:124px;top:347.7px;font-size:13.33px;font-family:'Liberation Mono', monospace;-webkit-text-stroke:0">shall see the face of Jesus in a bowl of</div>
<div class="t" style="left:124px;top:361.7px;font-size:13.33px;font-family:'Liberation Mono', monospace;-webkit-text-stroke:0">spaghetti.</div>
<div class="a" style="left:25px;top:392px;width:95px;height:22px;border:1px solid #000;background:#ececec"></div>
<div class="t" style="left:27px;top:395px;font-size:16px;font-weight:700;font-family:'Liberation Serif', serif;">Level</div>
<div class="a" style="left:122px;top:392px;width:485px;height:22px;border:1px solid #000;border-right:0;background:#dcdcdc"></div>
<div class="t" style="left:123px;top:394px;font-size:16.5px;font-family:'Liberation Serif', serif;">ERROR</div>
<div class="vtr" style="left:607px;top:251px;height:162px"></div>
<div class="a" style="left:607px;top:251px;width:15px;height:6px;background:linear-gradient(to right,#e8e8e8,#f8f8f8 50%,#eeeeee)"></div>
<div class="a" style="left:607px;top:256px;width:15px;height:10px;border-radius:7px 7px 0 0;border-top:1px solid #c4c4c4;background:linear-gradient(to bottom,#d8d8d8,rgba(255,255,255,0))"></div>
<div class="a" style="left:607px;top:382px;width:15px;height:31px;background:linear-gradient(to right,#e6e6e6,#fbfbfb 50%,#f0f0f0)"></div>
<div class="a" style="left:607px;top:378px;width:15px;height:5px;border-radius:0 0 7px 7px;border-bottom:1px solid #c8c8c8;background:linear-gradient(to right,#e2e2e2,#fafafa 50%,#ececec)"></div>
<div class="a" style="left:607px;top:397px;width:15px;height:1px;background:#d4d4d4"></div>
<div class="arr up" style="left:611px;top:386px"></div>
<div class="arr dn" style="left:611px;top:402px"></div>
<div class="kvi" style="left:608px;top:259px;width:13px;height:36px"></div>
<div class="htr" style="left:14px;top:414px;width:593px"></div>
<div class="a" style="left:14px;top:414px;width:6px;height:15px;background:linear-gradient(to bottom,#e8e8e8,#f8f8f8 50%,#eeeeee)"></div>
<div class="a" style="left:575px;top:414px;width:32px;height:15px;background:linear-gradient(to bottom,#e6e6e6,#fbfbfb 50%,#f0f0f0)"></div>
<div class="a" style="left:570px;top:414px;width:6px;height:15px;border-radius:0 7px 7px 0;border-right:1px solid #c8c8c8;background:linear-gradient(to bottom,#e2e2e2,#fafafa 50%,#ececec)"></div>
<div class="a" style="left:590px;top:414px;width:1px;height:15px;background:#d4d4d4"></div>
<div class="lf" style="left:579px;top:418px"></div>
<div class="rt" style="left:596px;top:418px"></div>
<div class="a" style="left:15px;top:414px;width:10px;height:15px;border:1px solid #b8b8b8;border-right:0;background:linear-gradient(to bottom,#ececec,#fafafa 50%,#f0f0f0)"></div>
<div class="khi" style="left:21px;top:415px;width:504px;height:13px"></div>
<div class="a" style="left:607px;top:414px;width:16px;height:15px;background:#fff"></div>
<div class="t" style="left:16px;top:435px;font-size:13.5px;letter-spacing:0.2px;">39 events.</div>
<div class="t" style="left:93px;top:435px;font-size:13.5px;letter-spacing:0.4px;">Size on disk: 48.94 kibibytes</div>
<svg class="a" style="left:622px;top:463px" width="13" height="13" viewBox="0 0 13 13"><rect x="0" y="0" width="13" height="13" fill="#f6f6f6"/><path d="M2.5 12.5 L12.5 2.5 M6.5 12.5 L12.5 6.5 M10.5 12.5 L12.5 10.5" stroke="#8a8a8a" stroke-width="1"/><path d="M3.5 12.5 L12.5 3.5 M7.5 12.5 L12.5 7.5" stroke="#fff" stroke-width="1"/></svg>
</div>
<div class="win stripe in" style="left:50px;top:114px;width:636px;z-index:3">
<div class="a" style="left:0px;top:21px;width:636px;height:1px;background:#858585"></div>
<div class="tl i" style="left:8px;top:4px"></div><div class="tl i" style="left:29px;top:4px"></div><div class="tl i" style="left:50px;top:4px"></div>
<svg class="a" style="left:165px;top:3px" width="16" height="16" viewBox="0 0 16 16"><rect x="6.5" y="0.5" width="9" height="7.5" fill="#fff" stroke="#777"/><rect x="8" y="2" width="6" height="4.5" fill="#3b5ea8"/><rect x="7.5" y="8.5" width="7" height="2.5" fill="#fff" stroke="#777"/><rect x="0.5" y="4.5" width="9" height="7.5" fill="#fff" stroke="#777"/><rect x="2" y="6" width="6" height="4.5" fill="#3b5ea8"/><rect x="0.5" y="12.5" width="8" height="3" fill="#fff" stroke="#777"/></svg>
<div class="t" style="left:186px;top:4px;font-size:14px;letter-spacing:0.12px;color:#707070;">Localhost – 20080408T224339180 (Logging)</div>
<div class="a" style="left:7px;top:38px;width:622px;height:414px;border:1px solid #bdbdbd;border-top-color:#969696;border-bottom-color:#d0d0d0;border-radius:5px;background:linear-gradient(rgba(0,0,0,0.06),rgba(0,0,0,0.02) 20px,rgba(0,0,0,0.02));box-shadow:inset 0 1px 0 rgba(0,0,0,0.05)"></div>
<div class="a" style="left:276px;top:27px;width:82px;height:21px;border:1px solid #8a8a8a;border-radius:5px;background:linear-gradient(#fdfdfd,#ececec 50%,#dedede 52%,#f4f4f4)"></div>
<div class="t" style="left:287px;top:30.5px;font-size:13.5px;letter-spacing:0.4px;">Unfiltered</div>
<div class="a" style="left:11px;top:55px;width:615px;height:378px;border:1px solid #a4a4a4;border-top-color:#747474;background:#ececec"></div>
<div class="a" style="left:13px;top:57px;width:611px;height:184px;border:1px solid #b4b4b4;border-top:1px solid #6e6e6e;border-bottom-color:#d4d4d4;background:#fff"></div>
<div class="a" style="left:14px;top:58px;width:593px;height:16px;background:linear-gradient(#ffffff,#f8f8f8 45%,#ededed 55%,#f6f6f6)"></div>
<div class="a" style="left:14px;top:74px;width:593px;height:1px;background:#b4b4b4"></div>
<div class="hd" style="left:15px;width:74px">ID</div>
<div class="a" style="left:88px;top:58px;width:1px;height:17px;background:#c4c4c4"></div>
<div class="hd" style="left:90px;width:73px">Timestamp</div>
<div class="a" style="left:162px;top:58px;width:1px;height:17px;background:#c4c4c4"></div>
<div class="hd" style="left:164px;width:73px">Level</div>
<div class="a" style="left:236px;top:58px;width:1px;height:17px;background:#c4c4c4"></div>
<div class="hd" style="left:238px;width:73px">Logger</div>
<div class="a" style="left:310px;top:58px;width:1px;height:17px;background:#c4c4c4"></div>
<div class="hd" style="left:312px;width:73px">Message</div>
<div class="a" style="left:384px;top:58px;width:1px;height:17px;background:#c4c4c4"></div>
<div class="hd" style="left:386px;width:73px">Throwable</div>
<div class="a" style="left:458px;top:58px;width:1px;height:17px;background:#c4c4c4"></div>
<div class="hd" style="left:460px;width:73px">Thread</div>
<div class="a" style="left:532px;top:58px;width:1px;height:17px;background:#c4c4c4"></div>
<div class="hd" style="left:534px;width:73px">Marker</div>
<div class="a" style="left:606px;top:58px;width:1px;height:17px;background:#c4c4c4"></div>
<div class="a" style="left:14px;top:75px;width:593px;height:165px;overflow:hidden">
<div class="rw" style="left:0px;top:-12px;width:75px;text-align:center">29</div>
<div class="rw" style="left:74.5px;top:-12px;letter-spacing:0.28px">22:44:41....</div>
<div class="a" style="left:149px;top:-12px;width:73px;height:15px;background:#ffff00"></div>
<div class="rw" style="left:149px;top:-12px;width:74px;text-align:center;color:#000;transform:scaleX(0.82);-webkit-text-stroke:0.25px #000">WARN</div>
<div class="rw" style="left:225px;top:-12px;">LoggerEv...</div>
<div class="rw" style="left:297.5px;top:-12px;">ThirdLev...</div>
<div class="rw" style="left:447px;top:-12px;">AWT-Eve...</div>
<div class="rw" style="left:0px;top:4px;width:75px;text-align:center">30</div>
<div class="rw" style="left:74.5px;top:4px;letter-spacing:0.28px">22:44:41....</div>
<div class="a" style="left:149px;top:4px;width:73px;height:15px;background:#ff0000"></div>
<div class="rw" style="left:149px;top:4px;width:74px;text-align:center;color:#ffff00;transform:scaleX(0.82);-webkit-text-stroke:0.5px #ffff00">ERROR</div>
<div class="rw" style="left:225px;top:4px;">LoggerEv...</div>
<div class="rw" style="left:297.5px;top:4px;">A error m...</div>
<div class="rw" style="left:372.5px;top:4px;">RuntimeE...</div>
<div class="rw" style="left:447px;top:4px;">AWT-Eve...</div>
<div class="rw" style="left:0px;top:20px;width:75px;text-align:center">31</div>
<div class="rw" style="left:74.5px;top:20px;letter-spacing:0.28px">22:44:41....</div>
<div class="a" style="left:149px;top:20px;width:73px;height:15px;background:#00ff00"></div>
<div class="rw" style="left:149px;top:20px;width:74px;text-align:center;color:#000;transform:scaleX(0.82);-webkit-text-stroke:0.25px #000">DEBUG</div>
<div class="rw" style="left:225px;top:20px;">LoggerEv...</div>
<div class="rw" style="left:297.5px;top:20px;">Skull! [+2...</div>
<div class="rw" style="left:447px;top:20px;">AWT-Eve...</div>
<div class="rw" style="left:0px;top:36px;width:75px;text-align:center">32</div>
<div class="rw" style="left:74.5px;top:36px;letter-spacing:0.28px">22:44:41....</div>
<div class="a" style="left:149px;top:36px;width:73px;height:15px;background:#ff0000"></div>
<div class="rw" style="left:149px;top:36px;width:74px;text-align:center;color:#ffff00;transform:scaleX(0.82);-webkit-text-stroke:0.5px #ffff00">ERROR</div>
<div class="rw" style="left:225px;top:36px;">LoggerEv...</div>
<div class="rw" style="left:297.5px;top:36px;">The Nort...</div>
<div class="rw" style="left:447px;top:36px;">AWT-Eve...</div>
<div class="rw" style="left:519px;top:36px;width:74px;text-align:center">Hail Eris!!</div>
<div class="rw" style="left:0px;top:52px;width:75px;text-align:center">33</div>
<div class="rw" style="left:74.5px;top:52px;letter-spacing:0.28px">22:44:42....</div>
<div class="rw" style="left:149px;top:52px;width:74px;text-align:center;color:#000;transform:scaleX(0.82);-webkit-text-stroke:0.25px #000">INFO</div>
<div class="rw" style="left:225px;top:52px;">LoggerEv...</div>
<div class="rw" style="left:297.5px;top:52px;">FirstLevel...</div>
<div class="rw" style="left:447px;top:52px;">AWT-Eve...</div>
<div class="rw" style="left:0px;top:68px;width:75px;text-align:center">34</div>
<div class="rw" style="left:74.5px;top:68px;letter-spacing:0.28px">22:44:42....</div>
<div class="a" style="left:149px;top:68px;width:73px;height:15px;background:#ffff00"></div>
<div class="rw" style="left:149px;top:68px;width:74px;text-align:center;color:#000;transform:scaleX(0.82);-webkit-text-stroke:0.25px #000">WARN</div>
<div class="rw" style="left:225px;top:68px;">LoggerEv...</div>
<div class="rw" style="left:297.5px;top:68px;">SecondLe...</div>
<div class="rw" style="left:447px;top:68px;">AWT-Eve...</div>
<div class="rw" style="left:0px;top:84px;width:75px;text-align:center">35</div>
<div class="rw" style="left:74.5px;top:84px;letter-spacing:0.28px">22:44:42....</div>
<div class="a" style="left:149px;top:84px;width:73px;height:15px;background:#ff0000"></div>
<div class="rw" style="left:149px;top:84px;width:74px;text-align:center;color:#ffff00;transform:scaleX(0.82);-webkit-text-stroke:0.5px #ffff00">ERROR</div>
<div class="rw" style="left:225px;top:84px;">LoggerEv...</div>
<div class="rw" style="left:297.5px;top:84px;">Anonymo...</div>
<div class="rw" style="left:447px;top:84px;">AWT-Eve...</div>
<div class="rw" style="left:0px;top:100px;width:75px;text-align:center">36</div>
<div class="rw" style="left:74.5px;top:100px;letter-spacing:0.28px">22:44:43....</div>
<div class="a" style="left:149px;top:100px;width:73px;height:15px;background:#ff0000"></div>
<div class="rw" style="left:149px;top:100px;width:74px;text-align:center;color:#ffff00;transform:scaleX(0.82);-webkit-text-stroke:0.5px #ffff00">ERROR</div>
<div class="rw" style="left:225px;top:100px;">LoggerEv...</div>
<div class="rw" style="left:297.5px;top:100px;">MethodIn...</div>
<div class="rw" style="left:447px;top:100px;">AWT-Eve...</div>
<div class="rw" style="left:0px;top:116px;width:75px;text-align:center">37</div>
<div class="rw" style="left:74.5px;top:116px;letter-spacing:0.28px">22:45:28....</div>
<div class="a" style="left:149px;top:116px;width:73px;height:15px;background:#ff0000"></div>
<div class="rw" style="left:149px;top:116px;width:74px;text-align:center;color:#ffff00;transform:scaleX(0.82);-webkit-text-stroke:0.5px #ffff00">ERROR</div>
<div class="rw" style="left:225px;top:116px;">LoggerEv...</div>
<div class="rw" style="left:297.5px;top:116px;">The Sout...</div>
<div class="rw" style="left:447px;top:116px;">AWT-Eve...</div>
<div class="rw" style="left:519px;top:116px;width:74px;text-align:center">Hail Eris!!</div>
<div class="rw" style="left:0px;top:132px;width:75px;text-align:center">38</div>
<div class="rw" style="left:74.5px;top:132px;letter-spacing:0.28px">22:45:28....</div>
<div class="a" style="left:149px;top:132px;width:73px;height:15px;background:#ff0000"></div>
<div class="rw" style="left:149px;top:132px;width:74px;text-align:center;color:#ffff00;transform:scaleX(0.82);-webkit-text-stroke:0.5px #ffff00">ERROR</div>
<div class="rw" style="left:225px;top:132px;">LoggerEv...</div>
<div class="rw" style="left:297.5px;top:132px;">The Jehov...</div>
<div class="rw" style="left:447px;top:132px;">AWT-Eve...</div>
<div class="rw" style="left:519px;top:132px;width:74px;text-align:center">Hail Eris!!</div>
<div class="a" style="left:1px;top:148px;width:73px;height:15px;background:#fffcb8"></div>
<div class="a" style="left:75px;top:148px;width:73px;height:15px;background:#fffcb8"></div>
<div class="a" style="left:149px;top:148px;width:73px;height:15px;background:#fffcb8"></div>
<div class="a" style="left:223px;top:148px;width:73px;height:15px;background:#fffcb8"></div>
<div class="a" style="left:297px;top:148px;width:73px;height:15px;background:#fffcb8"></div>
<div class="a" style="left:371px;top:148px;width:73px;height:15px;background:#fffcb8"></div>
<div class="a" style="left:445px;top:148px;width:73px;height:15px;background:#fffcb8"></div>
<div class="a" style="left:519px;top:148px;width:73px;height:15px;background:#fffcb8"></div>
<div class="rw" style="left:0px;top:148px;width:75px;text-align:center">39</div>
<div class="rw" style="left:74.5px;top:148px;letter-spacing:0.28px">22:45:29....</div>
<div class="a" style="left:149px;top:148px;width:73px;height:15px;background:#ff0000"></div>
<div class="rw" style="left:149px;top:148px;width:74px;text-align:center;color:#ffff00;transform:scaleX(0.82);-webkit-text-stroke:0.5px #ffff00">ERROR</div>
<div class="rw" style="left:225px;top:148px;">LoggerEv...</div>
<div class="rw" style="left:297.5px;top:148px;">The Shiit...</div>
<div class="rw" style="left:447px;top:148px;">AWT-Eve...</div>
<div class="rw" style="left:519px;top:148px;width:74px;text-align:center">Hail Eris!!</div>
</div>
<div class="vtr" style="left:607px;top:75px;height:165px"></div>
<div class="a" style="left:607px;top:75px;width:15px;height:6px;background:linear-gradient(to right,#e8e8e8,#f8f8f8 50%,#eeeeee)"></div>
<div class="a" style="left:607px;top:80px;width:15px;height:10px;border-radius:7px 7px 0 0;border-top:1px solid #c4c4c4;background:linear-gradient(to bottom,#d8d8d8,rgba(255,255,255,0))"></div>
<div class="a" style="left:607px;top:209px;width:15px;height:31px;background:linear-gradient(to right,#e6e6e6,#fbfbfb 50%,#f0f0f0)"></div>
<div class="a" style="left:607px;top:205px;width:15px;height:5px;border-radius:0 0 7px 7px;border-bottom:1px solid #c8c8c8;background:linear-gradient(to right,#e2e2e2,#fafafa 50%,#ececec)"></div>
<div class="a" style="left:607px;top:222px;width:15px;height:1px;background:#d4d4d4"></div>
<div class="arr up" style="left:611px;top:211px"></div>
<div class="arr dn" style="left:611px;top:228px"></div>
<div class="kvi" style="left:608px;top:178px;width:13px;height:29px"></div>
<div class="a" style="left:13px;top:241px;width:611px;height:9px;background:linear-gradient(#f2f2f2,#e6e6e6)"></div>
<svg class="a" style="left:314px;top:241px" width="10" height="9"><path d="M1.8 6.5 L4.5 3.6 L7.2 6.5" fill="none" stroke="#333" stroke-width="1.6"/></svg>
<div class="arr up" style="left:603px;top:243px;border-bottom:6px solid #a8a8a8"></div>
<div class="arr dn" style="left:614px;top:243px;border-top:6px solid #a8a8a8"></div>
<div class="a" style="left:13px;top:250px;width:611px;height:181px;border:1px solid #b4b4b4;border-top:1px solid #5e5e5e;background:#fff;box-shadow:inset 0 1px 0 #c8c8c8"></div>
<div class="a" style="left:25px;top:262px;width:95px;height:128px;border:1px solid #000;background:#cacaca;box-shadow:inset 0 0 0 1px #f0f0f0"></div>
<div class="t" style="left:27px;top:317.5px;font-size:16px;font-weight:700;font-family:'Liberation Serif', serif;">Message</div>
<div class="a" style="left:122px;top:262px;width:485px;height:128px;border:1px solid #000;border-right:0;background:#fff"></div>
<div class="t" style="left:124px;top:277.7px;font-size:13.33px;font-family:'Liberation Mono', monospace;-webkit-text-stroke:0">The Shiite Fire-worshipper Fellowship</div>
<div class="t" style="left:124px;top:291.7px;font-size:13.33px;font-family:'Liberation Mono', monospace;-webkit-text-stroke:0">rejects the notion that the Athanasian</div>
<div class="t" style="left:124px;top:305.7px;font-size:13.33px;font-family:'Liberation Mono', monospace;-webkit-text-stroke:0">creed predicts the eventual supremacy of</div>
<div class="t" style="left:124px;top:319.7px;font-size:13.33px;font-family:'Liberation Mono', monospace;-webkit-text-stroke:0">a certain absent-minded, father figure</div>
<div class="t" style="left:124px;top:333.7px;font-size:13.33px;font-family:'Liberation Mono', monospace;-webkit-text-stroke:0">ex-President, but preaches that soon we</div>
<div class="t" style="left:124px;top:347.7px;font-size:13.33px;font-family:'Liberation Mono', monospace;-webkit-text-stroke:0">shall see the face of Jesus in a bowl of</div>
<div class="t" style="left:124px;top:361.7px;font-size:13.33px;font-family:'Liberation Mono', monospace;-webkit-text-stroke:0">spaghetti.</div>
<div class="a" style="left:25px;top:392px;width:95px;height:22px;border:1px solid #000;background:#ececec"></div>
<div class="t" style="left:27px;top:395px;font-size:16px;font-weight:700;font-family:'Liberation Serif', serif;">Level</div>
<div class="a" style="left:122px;top:392px;width:485px;height:22px;border:1px solid #000;border-right:0;background:#dcdcdc"></div>
<div class="t" style="left:123px;top:394px;font-size:16.5px;font-family:'Liberation Serif', serif;">ERROR</div>
<div class="vtr" style="left:607px;top:251px;height:162px"></div>
<div class="a" style="left:607px;top:251px;width:15px;height:6px;background:linear-gradient(to right,#e8e8e8,#f8f8f8 50%,#eeeeee)"></div>
<div class="a" style="left:607px;top:256px;width:15px;height:10px;border-radius:7px 7px 0 0;border-top:1px solid #c4c4c4;background:linear-gradient(to bottom,#d8d8d8,rgba(255,255,255,0))"></div>
<div class="a" style="left:607px;top:382px;width:15px;height:31px;background:linear-gradient(to right,#e6e6e6,#fbfbfb 50%,#f0f0f0)"></div>
<div class="a" style="left:607px;top:378px;width:15px;height:5px;border-radius:0 0 7px 7px;border-bottom:1px solid #c8c8c8;background:linear-gradient(to right,#e2e2e2,#fafafa 50%,#ececec)"></div>
<div class="a" style="left:607px;top:397px;width:15px;height:1px;background:#d4d4d4"></div>
<div class="arr up" style="left:611px;top:386px"></div>
<div class="arr dn" style="left:611px;top:402px"></div>
<div class="kvi" style="left:608px;top:259px;width:13px;height:36px"></div>
<div class="htr" style="left:14px;top:414px;width:593px"></div>
<div class="a" style="left:14px;top:414px;width:6px;height:15px;background:linear-gradient(to bottom,#e8e8e8,#f8f8f8 50%,#eeeeee)"></div>
<div class="a" style="left:575px;top:414px;width:32px;height:15px;background:linear-gradient(to bottom,#e6e6e6,#fbfbfb 50%,#f0f0f0)"></div>
<div class="a" style="left:570px;top:414px;width:6px;height:15px;border-radius:0 7px 7px 0;border-right:1px solid #c8c8c8;background:linear-gradient(to bottom,#e2e2e2,#fafafa 50%,#ececec)"></div>
<div class="a" style="left:590px;top:414px;width:1px;height:15px;background:#d4d4d4"></div>
<div class="lf" style="left:579px;top:418px"></div>
<div class="rt" style="left:596px;top:418px"></div>
<div class="a" style="left:15px;top:414px;width:10px;height:15px;border:1px solid #b8b8b8;border-right:0;background:linear-gradient(to bottom,#ececec,#fafafa 50%,#f0f0f0)"></div>
<div class="khi" style="left:21px;top:415px;width:504px;height:13px"></div>
<div class="a" style="left:607px;top:414px;width:16px;height:15px;background:#fff"></div>
<div class="t" style="left:16px;top:435px;font-size:13.5px;letter-spacing:0.2px;">39 events.</div>
<div class="t" style="left:93px;top:435px;font-size:13.5px;letter-spacing:0.4px;">Size on disk: 48.94 kibibytes</div>
<svg class="a" style="left:622px;top:463px" width="13" height="13" viewBox="0 0 13 13"><rect x="0" y="0" width="13" height="13" fill="#f6f6f6"/><path d="M2.5 12.5 L12.5 2.5 M6.5 12.5 L12.5 6.5 M10.5 12.5 L12.5 10.5" stroke="#8a8a8a" stroke-width="1"/><path d="M3.5 12.5 L12.5 3.5 M7.5 12.5 L12.5 7.5" stroke="#fff" stroke-width="1"/></svg>
</div>
<div class="win stripe in" style="left:74px;top:138px;width:636px;z-index:4">
<div class="a" style="left:0px;top:21px;width:636px;height:1px;background:#858585"></div>
<div class="tl i" style="left:8px;top:4px"></div><div class="tl i" style="left:29px;top:4px"></div><div class="tl i" style="left:50px;top:4px"></div>
<svg class="a" style="left:165px;top:3px" width="16" height="16" viewBox="0 0 16 16"><rect x="6.5" y="0.5" width="9" height="7.5" fill="#fff" stroke="#777"/><rect x="8" y="2" width="6" height="4.5" fill="#3b5ea8"/><rect x="7.5" y="8.5" width="7" height="2.5" fill="#fff" stroke="#777"/><rect x="0.5" y="4.5" width="9" height="7.5" fill="#fff" stroke="#777"/><rect x="2" y="6" width="6" height="4.5" fill="#3b5ea8"/><rect x="0.5" y="12.5" width="8" height="3" fill="#fff" stroke="#777"/></svg>
<div class="t" style="left:186px;top:4px;font-size:14px;letter-spacing:0.12px;color:#707070;">Localhost – 20080408T224343383 (Logging)</div>
<div class="a" style="left:7px;top:38px;width:622px;height:414px;border:1px solid #bdbdbd;border-top-color:#969696;border-bottom-color:#d0d0d0;border-radius:5px;background:linear-gradient(rgba(0,0,0,0.06),rgba(0,0,0,0.02) 20px,rgba(0,0,0,0.02));box-shadow:inset 0 1px 0 rgba(0,0,0,0.05)"></div>
<div class="a" style="left:276px;top:27px;width:82px;height:21px;border:1px solid #8a8a8a;border-radius:5px;background:linear-gradient(#fdfdfd,#ececec 50%,#dedede 52%,#f4f4f4)"></div>
<div class="t" style="left:287px;top:30.5px;font-size:13.5px;letter-spacing:0.4px;">Unfiltered</div>
<div class="a" style="left:11px;top:55px;width:615px;height:378px;border:1px solid #a4a4a4;border-top-color:#747474;background:#ececec"></div>
<div class="a" style="left:13px;top:57px;width:611px;height:184px;border:1px solid #b4b4b4;border-top:1px solid #6e6e6e;border-bottom-color:#d4d4d4;background:#fff"></div>
<div class="a" style="left:14px;top:58px;width:593px;height:16px;background:linear-gradient(#ffffff,#f8f8f8 45%,#ededed 55%,#f6f6f6)"></div>
<div class="a" style="left:14px;top:74px;width:593px;height:1px;background:#b4b4b4"></div>
<div class="hd" style="left:15px;width:74px">ID</div>
<div class="a" style="left:88px;top:58px;width:1px;height:17px;background:#c4c4c4"></div>
<div class="hd" style="left:90px;width:73px">Timestamp</div>
<div class="a" style="left:162px;top:58px;width:1px;height:17px;background:#c4c4c4"></div>
<div class="hd" style="left:164px;width:73px">Level</div>
<div class="a" style="left:236px;top:58px;width:1px;height:17px;background:#c4c4c4"></div>
<div class="hd" style="left:238px;width:73px">Logger</div>
<div class="a" style="left:310px;top:58px;width:1px;height:17px;background:#c4c4c4"></div>
<div class="hd" style="left:312px;width:73px">Message</div>
<div class="a" style="left:384px;top:58px;width:1px;height:17px;background:#c4c4c4"></div>
<div class="hd" style="left:386px;width:73px">Throwable</div>
<div class="a" style="left:458px;top:58px;width:1px;height:17px;background:#c4c4c4"></div>
<div class="hd" style="left:460px;width:73px">Thread</div>
<div class="a" style="left:532px;top:58px;width:1px;height:17px;background:#c4c4c4"></div>
<div class="hd" style="left:534px;width:73px">Marker</div>
<div class="a" style="left:606px;top:58px;width:1px;height:17px;background:#c4c4c4"></div>
<div class="a" style="left:14px;top:75px;width:593px;height:165px;overflow:hidden">
<div class="rw" style="left:0px;top:-12px;width:75px;text-align:center">29</div>
<div class="rw" style="left:74.5px;top:-12px;letter-spacing:0.28px">22:44:41....</div>
<div class="a" style="left:149px;top:-12px;width:73px;height:15px;background:#ffff00"></div>
<div class="rw" style="left:149px;top:-12px;width:74px;text-align:center;color:#000;transform:scaleX(0.82);-webkit-text-stroke:0.25px #000">WARN</div>
<div class="rw" style="left:225px;top:-12px;">LoggerEv...</div>
<div class="rw" style="left:297.5px;top:-12px;">ThirdLev...</div>
<div class="rw" style="left:447px;top:-12px;">AWT-Eve...</div>
<div class="rw" style="left:0px;top:4px;width:75px;text-align:center">30</div>
<div class="rw" style="left:74.5px;top:4px;letter-spacing:0.28px">22:44:41....</div>
<div class="a" style="left:149px;top:4px;width:73px;height:15px;background:#ff0000"></div>
<div class="rw" style="left:149px;top:4px;width:74px;text-align:center;color:#ffff00;transform:scaleX(0.82);-webkit-text-stroke:0.5px #ffff00">ERROR</div>
<div class="rw" style="left:225px;top:4px;">LoggerEv...</div>
<div class="rw" style="left:297.5px;top:4px;">A error m...</div>
<div class="rw" style="left:372.5px;top:4px;">RuntimeE...</div>
<div class="rw" style="left:447px;top:4px;">AWT-Eve...</div>
<div class="rw" style="left:0px;top:20px;width:75px;text-align:center">31</div>
<div class="rw" style="left:74.5px;top:20px;letter-spacing:0.28px">22:44:41....</div>
<div class="a" style="left:149px;top:20px;width:73px;height:15px;background:#00ff00"></div>
<div class="rw" style="left:149px;top:20px;width:74px;text-align:center;color:#000;transform:scaleX(0.82);-webkit-text-stroke:0.25px #000">DEBUG</div>
<div class="rw" style="left:225px;top:20px;">LoggerEv...</div>
<div class="rw" style="left:297.5px;top:20px;">Skull! [+2...</div>
<div class="rw" style="left:447px;top:20px;">AWT-Eve...</div>
<div class="rw" style="left:0px;top:36px;width:75px;text-align:center">32</div>
<div class="rw" style="left:74.5px;top:36px;letter-spacing:0.28px">22:44:41....</div>
<div class="a" style="left:149px;top:36px;width:73px;height:15px;background:#ff0000"></div>
<div class="rw" style="left:149px;top:36px;width:74px;text-align:center;color:#ffff00;transform:scaleX(0.82);-webkit-text-stroke:0.5px #ffff00">ERROR</div>
<div class="rw" style="left:225px;top:36px;">LoggerEv...</div>
<div class="rw" style="left:297.5px;top:36px;">The Nort...</div>
<div class="rw" style="left:447px;top:36px;">AWT-Eve...</div>
<div class="rw" style="left:519px;top:36px;width:74px;text-align:center">Hail Eris!!</div>
<div class="rw" style="left:0px;top:52px;width:75px;text-align:center">33</div>
<div class="rw" style="left:74.5px;top:52px;letter-spacing:0.28px">22:44:42....</div>
<div class="rw" style="left:149px;top:52px;width:74px;text-align:center;color:#000;transform:scaleX(0.82);-webkit-text-stroke:0.25px #000">INFO</div>
<div class="rw" style="left:225px;top:52px;">LoggerEv...</div>
<div class="rw" style="left:297.5px;top:52px;">FirstLevel...</div>
<div class="rw" style="left:447px;top:52px;">AWT-Eve...</div>
<div class="rw" style="left:0px;top:68px;width:75px;text-align:center">34</div>
<div class="rw" style="left:74.5px;top:68px;letter-spacing:0.28px">22:44:42....</div>
<div class="a" style="left:149px;top:68px;width:73px;height:15px;background:#ffff00"></div>
<div class="rw" style="left:149px;top:68px;width:74px;text-align:center;color:#000;transform:scaleX(0.82);-webkit-text-stroke:0.25px #000">WARN</div>
<div class="rw" style="left:225px;top:68px;">LoggerEv...</div>
<div class="rw" style="left:297.5px;top:68px;">SecondLe...</div>
<div class="rw" style="left:447px;top:68px;">AWT-Eve...</div>
<div class="rw" style="left:0px;top:84px;width:75px;text-align:center">35</div>
<div class="rw" style="left:74.5px;top:84px;letter-spacing:0.28px">22:44:42....</div>
<div class="a" style="left:149px;top:84px;width:73px;height:15px;background:#ff0000"></div>
<div class="rw" style="left:149px;top:84px;width:74px;text-align:center;color:#ffff00;transform:scaleX(0.82);-webkit-text-stroke:0.5px #ffff00">ERROR</div>
<div class="rw" style="left:225px;top:84px;">LoggerEv...</div>
<div class="rw" style="left:297.5px;top:84px;">Anonymo...</div>
<div class="rw" style="left:447px;top:84px;">AWT-Eve...</div>
<div class="rw" style="left:0px;top:100px;width:75px;text-align:center">36</div>
<div class="rw" style="left:74.5px;top:100px;letter-spacing:0.28px">22:44:43....</div>
<div class="a" style="left:149px;top:100px;width:73px;height:15px;background:#ff0000"></div>
<div class="rw" style="left:149px;top:100px;width:74px;text-align:center;color:#ffff00;transform:scaleX(0.82);-webkit-text-stroke:0.5px #ffff00">ERROR</div>
<div class="rw" style="left:225px;top:100px;">LoggerEv...</div>
<div class="rw" style="left:297.5px;top:100px;">MethodIn...</div>
<div class="rw" style="left:447px;top:100px;">AWT-Eve...</div>
<div class="rw" style="left:0px;top:116px;width:75px;text-align:center">37</div>
<div class="rw" style="left:74.5px;top:116px;letter-spacing:0.28px">22:45:28....</div>
<div class="a" style="left:149px;top:116px;width:73px;height:15px;background:#ff0000"></div>
<div class="rw" style="left:149px;top:116px;width:74px;text-align:center;color:#ffff00;transform:scaleX(0.82);-webkit-text-stroke:0.5px #ffff00">ERROR</div>
<div class="rw" style="left:225px;top:116px;">LoggerEv...</div>
<div class="rw" style="left:297.5px;top:116px;">The Sout...</div>
<div class="rw" style="left:447px;top:116px;">AWT-Eve...</div>
<div class="rw" style="left:519px;top:116px;width:74px;text-align:center">Hail Eris!!</div>
<div class="rw" style="left:0px;top:132px;width:75px;text-align:center">38</div>
<div class="rw" style="left:74.5px;top:132px;letter-spacing:0.28px">22:45:28....</div>
<div class="a" style="left:149px;top:132px;width:73px;height:15px;background:#ff0000"></div>
<div class="rw" style="left:149px;top:132px;width:74px;text-align:center;color:#ffff00;transform:scaleX(0.82);-webkit-text-stroke:0.5px #ffff00">ERROR</div>
<div class="rw" style="left:225px;top:132px;">LoggerEv...</div>
<div class="rw" style="left:297.5px;top:132px;">The Jehov...</div>
<div class="rw" style="left:447px;top:132px;">AWT-Eve...</div>
<div class="rw" style="left:519px;top:132px;width:74px;text-align:center">Hail Eris!!</div>
<div class="a" style="left:1px;top:148px;width:73px;height:15px;background:#fffcb8"></div>
<div class="a" style="left:75px;top:148px;width:73px;height:15px;background:#fffcb8"></div>
<div class="a" style="left:149px;top:148px;width:73px;height:15px;background:#fffcb8"></div>
<div class="a" style="left:223px;top:148px;width:73px;height:15px;background:#fffcb8"></div>
<div class="a" style="left:297px;top:148px;width:73px;height:15px;background:#fffcb8"></div>
<div class="a" style="left:371px;top:148px;width:73px;height:15px;background:#fffcb8"></div>
<div class="a" style="left:445px;top:148px;width:73px;height:15px;background:#fffcb8"></div>
<div class="a" style="left:519px;top:148px;width:73px;height:15px;background:#fffcb8"></div>
<div class="rw" style="left:0px;top:148px;width:75px;text-align:center">39</div>
<div class="rw" style="left:74.5px;top:148px;letter-spacing:0.28px">22:45:29....</div>
<div class="a" style="left:149px;top:148px;width:73px;height:15px;background:#ff0000"></div>
<div class="rw" style="left:149px;top:148px;width:74px;text-align:center;color:#ffff00;transform:scaleX(0.82);-webkit-text-stroke:0.5px #ffff00">ERROR</div>
<div class="rw" style="left:225px;top:148px;">LoggerEv...</div>
<div class="rw" style="left:297.5px;top:148px;">The Shiit...</div>
<div class="rw" style="left:447px;top:148px;">AWT-Eve...</div>
<div class="rw" style="left:519px;top:148px;width:74px;text-align:center">Hail Eris!!</div>
</div>
<div class="vtr" style="left:607px;top:75px;height:165px"></div>
<div class="a" style="left:607px;top:75px;width:15px;height:6px;background:linear-gradient(to right,#e8e8e8,#f8f8f8 50%,#eeeeee)"></div>
<div class="a" style="left:607px;top:80px;width:15px;height:10px;border-radius:7px 7px 0 0;border-top:1px solid #c4c4c4;background:linear-gradient(to bottom,#d8d8d8,rgba(255,255,255,0))"></div>
<div class="a" style="left:607px;top:209px;width:15px;height:31px;background:linear-gradient(to right,#e6e6e6,#fbfbfb 50%,#f0f0f0)"></div>
<div class="a" style="left:607px;top:205px;width:15px;height:5px;border-radius:0 0 7px 7px;border-bottom:1px solid #c8c8c8;background:linear-gradient(to right,#e2e2e2,#fafafa 50%,#ececec)"></div>
<div class="a" style="left:607px;top:222px;width:15px;height:1px;background:#d4d4d4"></div>
<div class="arr up" style="left:611px;top:211px"></div>
<div class="arr dn" style="left:611px;top:228px"></div>
<div class="kvi" style="left:608px;top:178px;width:13px;height:29px"></div>
<div class="a" style="left:13px;top:241px;width:611px;height:9px;background:linear-gradient(#f2f2f2,#e6e6e6)"></div>
<svg class="a" style="left:314px;top:241px" width="10" height="9"><path d="M1.8 6.5 L4.5 3.6 L7.2 6.5" fill="none" stroke="#333" stroke-width="1.6"/></svg>
<div class="arr up" style="left:603px;top:243px;border-bottom:6px solid #a8a8a8"></div>
<div class="arr dn" style="left:614px;top:243px;border-top:6px solid #a8a8a8"></div>
<div class="a" style="left:13px;top:250px;width:611px;height:181px;border:1px solid #b4b4b4;border-top:1px solid #5e5e5e;background:#fff;box-shadow:inset 0 1px 0 #c8c8c8"></div>
<div class="a" style="left:25px;top:262px;width:95px;height:128px;border:1px solid #000;background:#cacaca;box-shadow:inset 0 0 0 1px #f0f0f0"></div>
<div class="t" style="left:27px;top:317.5px;font-size:16px;font-weight:700;font-family:'Liberation Serif', serif;">Message</div>
<div class="a" style="left:122px;top:262px;width:485px;height:128px;border:1px solid #000;border-right:0;background:#fff"></div>
<div class="t" style="left:124px;top:277.7px;font-size:13.33px;font-family:'Liberation Mono', monospace;-webkit-text-stroke:0">The Shiite Fire-worshipper Fellowship</div>
<div class="t" style="left:124px;top:291.7px;font-size:13.33px;font-family:'Liberation Mono', monospace;-webkit-text-stroke:0">rejects the notion that the Athanasian</div>
<div class="t" style="left:124px;top:305.7px;font-size:13.33px;font-family:'Liberation Mono', monospace;-webkit-text-stroke:0">creed predicts the eventual supremacy of</div>
<div class="t" style="left:124px;top:319.7px;font-size:13.33px;font-family:'Liberation Mono', monospace;-webkit-text-stroke:0">a certain absent-minded, father figure</div>
<div class="t" style="left:124px;top:333.7px;font-size:13.33px;font-family:'Liberation Mono', monospace;-webkit-text-stroke:0">ex-President, but preaches that soon we</div>
<div class="t" style="left:124px;top:347.7px;font-size:13.33px;font-family:'Liberation Mono', monospace;-webkit-text-stroke:0">shall see the face of Jesus in a bowl of</div>
<div class="t" style="left:124px;top:361.7px;font-size:13.33px;font-family:'Liberation Mono', monospace;-webkit-text-stroke:0">spaghetti.</div>
<div class="a" style="left:25px;top:392px;width:95px;height:22px;border:1px solid #000;background:#ececec"></div>
<div class="t" style="left:27px;top:395px;font-size:16px;font-weight:700;font-family:'Liberation Serif', serif;">Level</div>
<div class="a" style="left:122px;top:392px;width:485px;height:22px;border:1px solid #000;border-right:0;background:#dcdcdc"></div>
<div class="t" style="left:123px;top:394px;font-size:16.5px;font-family:'Liberation Serif', serif;">ERROR</div>
<div class="vtr" style="left:607px;top:251px;height:162px"></div>
<div class="a" style="left:607px;top:251px;width:15px;height:6px;background:linear-gradient(to right,#e8e8e8,#f8f8f8 50%,#eeeeee)"></div>
<div class="a" style="left:607px;top:256px;width:15px;height:10px;border-radius:7px 7px 0 0;border-top:1px solid #c4c4c4;background:linear-gradient(to bottom,#d8d8d8,rgba(255,255,255,0))"></div>
<div class="a" style="left:607px;top:382px;width:15px;height:31px;background:linear-gradient(to right,#e6e6e6,#fbfbfb 50%,#f0f0f0)"></div>
<div class="a" style="left:607px;top:378px;width:15px;height:5px;border-radius:0 0 7px 7px;border-bottom:1px solid #c8c8c8;background:linear-gradient(to right,#e2e2e2,#fafafa 50%,#ececec)"></div>
<div class="a" style="left:607px;top:397px;width:15px;height:1px;background:#d4d4d4"></div>
<div class="arr up" style="left:611px;top:386px"></div>
<div class="arr dn" style="left:611px;top:402px"></div>
<div class="kvi" style="left:608px;top:259px;width:13px;height:36px"></div>
<div class="htr" style="left:14px;top:414px;width:593px"></div>
<div class="a" style="left:14px;top:414px;width:6px;height:15px;background:linear-gradient(to bottom,#e8e8e8,#f8f8f8 50%,#eeeeee)"></div>
<div class="a" style="left:575px;top:414px;width:32px;height:15px;background:linear-gradient(to bottom,#e6e6e6,#fbfbfb 50%,#f0f0f0)"></div>
<div class="a" style="left:570px;top:414px;width:6px;height:15px;border-radius:0 7px 7px 0;border-right:1px solid #c8c8c8;background:linear-gradient(to bottom,#e2e2e2,#fafafa 50%,#ececec)"></div>
<div class="a" style="left:590px;top:414px;width:1px;height:15px;background:#d4d4d4"></div>
<div class="lf" style="left:579px;top:418px"></div>
<div class="rt" style="left:596px;top:418px"></div>
<div class="a" style="left:15px;top:414px;width:10px;height:15px;border:1px solid #b8b8b8;border-right:0;background:linear-gradient(to bottom,#ececec,#fafafa 50%,#f0f0f0)"></div>
<div class="khi" style="left:21px;top:415px;width:504px;height:13px"></div>
<div class="a" style="left:607px;top:414px;width:16px;height:15px;background:#fff"></div>
<div class="t" style="left:16px;top:435px;font-size:13.5px;letter-spacing:0.2px;">39 events.</div>
<div class="t" style="left:93px;top:435px;font-size:13.5px;letter-spacing:0.4px;">Size on disk: 48.94 kibibytes</div>
<svg class="a" style="left:622px;top:463px" width="13" height="13" viewBox="0 0 13 13"><rect x="0" y="0" width="13" height="13" fill="#f6f6f6"/><path d="M2.5 12.5 L12.5 2.5 M6.5 12.5 L12.5 6.5 M10.5 12.5 L12.5 10.5" stroke="#8a8a8a" stroke-width="1"/><path d="M3.5 12.5 L12.5 3.5 M7.5 12.5 L12.5 7.5" stroke="#fff" stroke-width="1"/></svg>
</div>
<div class="win stripe in" style="left:98px;top:162px;width:636px;z-index:5">
<div class="a" style="left:0px;top:21px;width:636px;height:1px;background:#858585"></div>
<div class="tl i" style="left:8px;top:4px"></div><div class="tl i" style="left:29px;top:4px"></div><div class="tl i" style="left:50px;top:4px"></div>
<svg class="a" style="left:165px;top:3px" width="16" height="16" viewBox="0 0 16 16"><rect x="6.5" y="0.5" width="9" height="7.5" fill="#fff" stroke="#777"/><rect x="8" y="2" width="6" height="4.5" fill="#3b5ea8"/><rect x="7.5" y="8.5" width="7" height="2.5" fill="#fff" stroke="#777"/><rect x="0.5" y="4.5" width="9" height="7.5" fill="#fff" stroke="#777"/><rect x="2" y="6" width="6" height="4.5" fill="#3b5ea8"/><rect x="0.5" y="12.5" width="8" height="3" fill="#fff" stroke="#777"/></svg>
<div class="t" style="left:186px;top:4px;font-size:14px;letter-spacing:0.12px;color:#707070;">Localhost – 20080408T224346371 (Logging)</div>
<div class="a" style="left:7px;top:38px;width:622px;height:414px;border:1px solid #bdbdbd;border-top-color:#969696;border-bottom-color:#d0d0d0;border-radius:5px;background:linear-gradient(rgba(0,0,0,0.06),rgba(0,0,0,0.02) 20px,rgba(0,0,0,0.02));box-shadow:inset 0 1px 0 rgba(0,0,0,0.05)"></div>
<div class="a" style="left:276px;top:27px;width:82px;height:21px;border:1px solid #8a8a8a;border-radius:5px;background:linear-gradient(#fdfdfd,#ececec 50%,#dedede 52%,#f4f4f4)"></div>
<div class="t" style="left:287px;top:30.5px;font-size:13.5px;letter-spacing:0.4px;">Unfiltered</div>
<div class="a" style="left:11px;top:55px;width:615px;height:378px;border:1px solid #a4a4a4;border-top-color:#747474;background:#ececec"></div>
<div class="a" style="left:13px;top:57px;width:611px;height:184px;border:1px solid #b4b4b4;border-top:1px solid #6e6e6e;border-bottom-color:#d4d4d4;background:#fff"></div>
<div class="a" style="left:14px;top:58px;width:593px;height:16px;background:linear-gradient(#ffffff,#f8f8f8 45%,#ededed 55%,#f6f6f6)"></div>
<div class="a" style="left:14px;top:74px;width:593px;height:1px;background:#b4b4b4"></div>
<div class="hd" style="left:15px;width:74px">ID</div>
<div class="a" style="left:88px;top:58px;width:1px;height:17px;background:#c4c4c4"></div>
<div class="hd" style="left:90px;width:73px">Timestamp</div>
<div class="a" style="left:162px;top:58px;width:1px;height:17px;background:#c4c4c4"></div>
<div class="hd" style="left:164px;width:73px">Level</div>
<div class="a" style="left:236px;top:58px;width:1px;height:17px;background:#c4c4c4"></div>
<div class="hd" style="left:238px;width:73px">Logger</div>
<div class="a" style="left:310px;top:58px;width:1px;height:17px;background:#c4c4c4"></div>
<div class="hd" style="left:312px;width:73px">Message</div>
<div class="a" style="left:384px;top:58px;width:1px;height:17px;background:#c4c4c4"></div>
<div class="hd" style="left:386px;width:73px">Throwable</div>
<div class="a" style="left:458px;top:58px;width:1px;height:17px;background:#c4c4c4"></div>
<div class="hd" style="left:460px;width:73px">Thread</div>
<div class="a" style="left:532px;top:58px;width:1px;height:17px;background:#c4c4c4"></div>
<div class="hd" style="left:534px;width:73px">Marker</div>
<div class="a" style="left:606px;top:58px;width:1px;height:17px;background:#c4c4c4"></div>
<div class="a" style="left:14px;top:75px;width:593px;height:165px;overflow:hidden">
<div class="rw" style="left:0px;top:-12px;width:75px;text-align:center">29</div>
<div class="rw" style="left:74.5px;top:-12px;letter-spacing:0.28px">22:44:41....</div>
<div class="a" style="left:149px;top:-12px;width:73px;height:15px;background:#ffff00"></div>
<div class="rw" style="left:149px;top:-12px;width:74px;text-align:center;color:#000;transform:scaleX(0.82);-webkit-text-stroke:0.25px #000">WARN</div>
<div class="rw" style="left:225px;top:-12px;">LoggerEv...</div>
<div class="rw" style="left:297.5px;top:-12px;">ThirdLev...</div>
<div class="rw" style="left:447px;top:-12px;">AWT-Eve...</div>
<div class="rw" style="left:0px;top:4px;width:75px;text-align:center">30</div>
<div class="rw" style="left:74.5px;top:4px;letter-spacing:0.28px">22:44:41....</div>
<div class="a" style="left:149px;top:4px;width:73px;height:15px;background:#ff0000"></div>
<div class="rw" style="left:149px;top:4px;width:74px;text-align:center;color:#ffff00;transform:scaleX(0.82);-webkit-text-stroke:0.5px #ffff00">ERROR</div>
<div class="rw" style="left:225px;top:4px;">LoggerEv...</div>
<div class="rw" style="left:297.5px;top:4px;">A error m...</div>
<div class="rw" style="left:372.5px;top:4px;">RuntimeE...</div>
<div class="rw" style="left:447px;top:4px;">AWT-Eve...</div>
<div class="rw" style="left:0px;top:20px;width:75px;text-align:center">31</div>
<div class="rw" style="left:74.5px;top:20px;letter-spacing:0.28px">22:44:41....</div>
<div class="a" style="left:149px;top:20px;width:73px;height:15px;background:#00ff00"></div>
<div class="rw" style="left:149px;top:20px;width:74px;text-align:center;color:#000;transform:scaleX(0.82);-webkit-text-stroke:0.25px #000">DEBUG</div>
<div class="rw" style="left:225px;top:20px;">LoggerEv...</div>
<div class="rw" style="left:297.5px;top:20px;">Skull! [+2...</div>
<div class="rw" style="left:447px;top:20px;">AWT-Eve...</div>
<div class="rw" style="left:0px;top:36px;width:75px;text-align:center">32</div>
<div class="rw" style="left:74.5px;top:36px;letter-spacing:0.28px">22:44:41....</div>
<div class="a" style="left:149px;top:36px;width:73px;height:15px;background:#ff0000"></div>
<div class="rw" style="left:149px;top:36px;width:74px;text-align:center;color:#ffff00;transform:scaleX(0.82);-webkit-text-stroke:0.5px #ffff00">ERROR</div>
<div class="rw" style="left:225px;top:36px;">LoggerEv...</div>
<div class="rw" style="left:297.5px;top:36px;">The Nort...</div>
<div class="rw" style="left:447px;top:36px;">AWT-Eve...</div>
<div class="rw" style="left:519px;top:36px;width:74px;text-align:center">Hail Eris!!</div>
<div class="rw" style="left:0px;top:52px;width:75px;text-align:center">33</div>
<div class="rw" style="left:74.5px;top:52px;letter-spacing:0.28px">22:44:42....</div>
<div class="rw" style="left:149px;top:52px;width:74px;text-align:center;color:#000;transform:scaleX(0.82);-webkit-text-stroke:0.25px #000">INFO</div>
<div class="rw" style="left:225px;top:52px;">LoggerEv...</div>
<div class="rw" style="left:297.5px;top:52px;">FirstLevel...</div>
<div class="rw" style="left:447px;top:52px;">AWT-Eve...</div>
<div class="rw" style="left:0px;top:68px;width:75px;text-align:center">34</div>
<div class="rw" style="left:74.5px;top:68px;letter-spacing:0.28px">22:44:42....</div>
<div class="a" style="left:149px;top:68px;width:73px;height:15px;background:#ffff00"></div>
<div class="rw" style="left:149px;top:68px;width:74px;text-align:center;color:#000;transform:scaleX(0.82);-webkit-text-stroke:0.25px #000">WARN</div>
<div class="rw" style="left:225px;top:68px;">LoggerEv...</div>
<div class="rw" style="left:297.5px;top:68px;">SecondLe...</div>
<div class="rw" style="left:447px;top:68px;">AWT-Eve...</div>
<div class="rw" style="left:0px;top:84px;width:75px;text-align:center">35</div>
<div class="rw" style="left:74.5px;top:84px;letter-spacing:0.28px">22:44:42....</div>
<div class="a" style="left:149px;top:84px;width:73px;height:15px;background:#ff0000"></div>
<div class="rw" style="left:149px;top:84px;width:74px;text-align:center;color:#ffff00;transform:scaleX(0.82);-webkit-text-stroke:0.5px #ffff00">ERROR</div>
<div class="rw" style="left:225px;top:84px;">LoggerEv...</div>
<div class="rw" style="left:297.5px;top:84px;">Anonymo...</div>
<div class="rw" style="left:447px;top:84px;">AWT-Eve...</div>
<div class="rw" style="left:0px;top:100px;width:75px;text-align:center">36</div>
<div class="rw" style="left:74.5px;top:100px;letter-spacing:0.28px">22:44:43....</div>
<div class="a" style="left:149px;top:100px;width:73px;height:15px;background:#ff0000"></div>
<div class="rw" style="left:149px;top:100px;width:74px;text-align:center;color:#ffff00;transform:scaleX(0.82);-webkit-text-stroke:0.5px #ffff00">ERROR</div>
<div class="rw" style="left:225px;top:100px;">LoggerEv...</div>
<div class="rw" style="left:297.5px;top:100px;">MethodIn...</div>
<div class="rw" style="left:447px;top:100px;">AWT-Eve...</div>
<div class="rw" style="left:0px;top:116px;width:75px;text-align:center">37</div>
<div class="rw" style="left:74.5px;top:116px;letter-spacing:0.28px">22:45:28....</div>
<div class="a" style="left:149px;top:116px;width:73px;height:15px;background:#ff0000"></div>
<div class="rw" style="left:149px;top:116px;width:74px;text-align:center;color:#ffff00;transform:scaleX(0.82);-webkit-text-stroke:0.5px #ffff00">ERROR</div>
<div class="rw" style="left:225px;top:116px;">LoggerEv...</div>
<div class="rw" style="left:297.5px;top:116px;">The Sout...</div>
<div class="rw" style="left:447px;top:116px;">AWT-Eve...</div>
<div class="rw" style="left:519px;top:116px;width:74px;text-align:center">Hail Eris!!</div>
<div class="rw" style="left:0px;top:132px;width:75px;text-align:center">38</div>
<div class="rw" style="left:74.5px;top:132px;letter-spacing:0.28px">22:45:28....</div>
<div class="a" style="left:149px;top:132px;width:73px;height:15px;background:#ff0000"></div>
<div class="rw" style="left:149px;top:132px;width:74px;text-align:center;color:#ffff00;transform:scaleX(0.82);-webkit-text-stroke:0.5px #ffff00">ERROR</div>
<div class="rw" style="left:225px;top:132px;">LoggerEv...</div>
<div class="rw" style="left:297.5px;top:132px;">The Jehov...</div>
<div class="rw" style="left:447px;top:132px;">AWT-Eve...</div>
<div class="rw" style="left:519px;top:132px;width:74px;text-align:center">Hail Eris!!</div>
<div class="a" style="left:1px;top:148px;width:73px;height:15px;background:#fffcb8"></div>
<div class="a" style="left:75px;top:148px;width:73px;height:15px;background:#fffcb8"></div>
<div class="a" style="left:149px;top:148px;width:73px;height:15px;background:#fffcb8"></div>
<div class="a" style="left:223px;top:148px;width:73px;height:15px;background:#fffcb8"></div>
<div class="a" style="left:297px;top:148px;width:73px;height:15px;background:#fffcb8"></div>
<div class="a" style="left:371px;top:148px;width:73px;height:15px;background:#fffcb8"></div>
<div class="a" style="left:445px;top:148px;width:73px;height:15px;background:#fffcb8"></div>
<div class="a" style="left:519px;top:148px;width:73px;height:15px;background:#fffcb8"></div>
<div class="rw" style="left:0px;top:148px;width:75px;text-align:center">39</div>
<div class="rw" style="left:74.5px;top:148px;letter-spacing:0.28px">22:45:29....</div>
<div class="a" style="left:149px;top:148px;width:73px;height:15px;background:#ff0000"></div>
<div class="rw" style="left:149px;top:148px;width:74px;text-align:center;color:#ffff00;transform:scaleX(0.82);-webkit-text-stroke:0.5px #ffff00">ERROR</div>
<div class="rw" style="left:225px;top:148px;">LoggerEv...</div>
<div class="rw" style="left:297.5px;top:148px;">The Shiit...</div>
<div class="rw" style="left:447px;top:148px;">AWT-Eve...</div>
<div class="rw" style="left:519px;top:148px;width:74px;text-align:center">Hail Eris!!</div>
</div>
<div class="vtr" style="left:607px;top:75px;height:165px"></div>
<div class="a" style="left:607px;top:75px;width:15px;height:6px;background:linear-gradient(to right,#e8e8e8,#f8f8f8 50%,#eeeeee)"></div>
<div class="a" style="left:607px;top:80px;width:15px;height:10px;border-radius:7px 7px 0 0;border-top:1px solid #c4c4c4;background:linear-gradient(to bottom,#d8d8d8,rgba(255,255,255,0))"></div>
<div class="a" style="left:607px;top:209px;width:15px;height:31px;background:linear-gradient(to right,#e6e6e6,#fbfbfb 50%,#f0f0f0)"></div>
<div class="a" style="left:607px;top:205px;width:15px;height:5px;border-radius:0 0 7px 7px;border-bottom:1px solid #c8c8c8;background:linear-gradient(to right,#e2e2e2,#fafafa 50%,#ececec)"></div>
<div class="a" style="left:607px;top:222px;width:15px;height:1px;background:#d4d4d4"></div>
<div class="arr up" style="left:611px;top:211px"></div>
<div class="arr dn" style="left:611px;top:228px"></div>
<div class="kvi" style="left:608px;top:178px;width:13px;height:29px"></div>
<div class="a" style="left:13px;top:241px;width:611px;height:9px;background:linear-gradient(#f2f2f2,#e6e6e6)"></div>
<svg class="a" style="left:314px;top:241px" width="10" height="9"><path d="M1.8 6.5 L4.5 3.6 L7.2 6.5" fill="none" stroke="#333" stroke-width="1.6"/></svg>
<div class="arr up" style="left:603px;top:243px;border-bottom:6px solid #a8a8a8"></div>
<div class="arr dn" style="left:614px;top:243px;border-top:6px solid #a8a8a8"></div>
<div class="a" style="left:13px;top:250px;width:611px;height:181px;border:1px solid #b4b4b4;border-top:1px solid #5e5e5e;background:#fff;box-shadow:inset 0 1px 0 #c8c8c8"></div>
<div class="a" style="left:25px;top:262px;width:95px;height:128px;border:1px solid #000;background:#cacaca;box-shadow:inset 0 0 0 1px #f0f0f0"></div>
<div class="t" style="left:27px;top:317.5px;font-size:16px;font-weight:700;font-family:'Liberation Serif', serif;">Message</div>
<div class="a" style="left:122px;top:262px;width:485px;height:128px;border:1px solid #000;border-right:0;background:#fff"></div>
<div class="t" style="left:124px;top:277.7px;font-size:13.33px;font-family:'Liberation Mono', monospace;-webkit-text-stroke:0">The Shiite Fire-worshipper Fellowship</div>
<div class="t" style="left:124px;top:291.7px;font-size:13.33px;font-family:'Liberation Mono', monospace;-webkit-text-stroke:0">rejects the notion that the Athanasian</div>
<div class="t" style="left:124px;top:305.7px;font-size:13.33px;font-family:'Liberation Mono', monospace;-webkit-text-stroke:0">creed predicts the eventual supremacy of</div>
<div class="t" style="left:124px;top:319.7px;font-size:13.33px;font-family:'Liberation Mono', monospace;-webkit-text-stroke:0">a certain absent-minded, father figure</div>
<div class="t" style="left:124px;top:333.7px;font-size:13.33px;font-family:'Liberation Mono', monospace;-webkit-text-stroke:0">ex-President, but preaches that soon we</div>
<div class="t" style="left:124px;top:347.7px;font-size:13.33px;font-family:'Liberation Mono', monospace;-webkit-text-stroke:0">shall see the face of Jesus in a bowl of</div>
<div class="t" style="left:124px;top:361.7px;font-size:13.33px;font-family:'Liberation Mono', monospace;-webkit-text-stroke:0">spaghetti.</div>
<div class="a" style="left:25px;top:392px;width:95px;height:22px;border:1px solid #000;background:#ececec"></div>
<div class="t" style="left:27px;top:395px;font-size:16px;font-weight:700;font-family:'Liberation Serif', serif;">Level</div>
<div class="a" style="left:122px;top:392px;width:485px;height:22px;border:1px solid #000;border-right:0;background:#dcdcdc"></div>
<div class="t" style="left:123px;top:394px;font-size:16.5px;font-family:'Liberation Serif', serif;">ERROR</div>
<div class="vtr" style="left:607px;top:251px;height:162px"></div>
<div class="a" style="left:607px;top:251px;width:15px;height:6px;background:linear-gradient(to right,#e8e8e8,#f8f8f8 50%,#eeeeee)"></div>
<div class="a" style="left:607px;top:256px;width:15px;height:10px;border-radius:7px 7px 0 0;border-top:1px solid #c4c4c4;background:linear-gradient(to bottom,#d8d8d8,rgba(255,255,255,0))"></div>
<div class="a" style="left:607px;top:382px;width:15px;height:31px;background:linear-gradient(to right,#e6e6e6,#fbfbfb 50%,#f0f0f0)"></div>
<div class="a" style="left:607px;top:378px;width:15px;height:5px;border-radius:0 0 7px 7px;border-bottom:1px solid #c8c8c8;background:linear-gradient(to right,#e2e2e2,#fafafa 50%,#ececec)"></div>
<div class="a" style="left:607px;top:397px;width:15px;height:1px;background:#d4d4d4"></div>
<div class="arr up" style="left:611px;top:386px"></div>
<div class="arr dn" style="left:611px;top:402px"></div>
<div class="kvi" style="left:608px;top:259px;width:13px;height:36px"></div>
<div class="htr" style="left:14px;top:414px;width:593px"></div>
<div class="a" style="left:14px;top:414px;width:6px;height:15px;background:linear-gradient(to bottom,#e8e8e8,#f8f8f8 50%,#eeeeee)"></div>
<div class="a" style="left:575px;top:414px;width:32px;height:15px;background:linear-gradient(to bottom,#e6e6e6,#fbfbfb 50%,#f0f0f0)"></div>
<div class="a" style="left:570px;top:414px;width:6px;height:15px;border-radius:0 7px 7px 0;border-right:1px solid #c8c8c8;background:linear-gradient(to bottom,#e2e2e2,#fafafa 50%,#ececec)"></div>
<div class="a" style="left:590px;top:414px;width:1px;height:15px;background:#d4d4d4"></div>
<div class="lf" style="left:579px;top:418px"></div>
<div class="rt" style="left:596px;top:418px"></div>
<div class="a" style="left:15px;top:414px;width:10px;height:15px;border:1px solid #b8b8b8;border-right:0;background:linear-gradient(to bottom,#ececec,#fafafa 50%,#f0f0f0)"></div>
<div class="khi" style="left:21px;top:415px;width:504px;height:13px"></div>
<div class="a" style="left:607px;top:414px;width:16px;height:15px;background:#fff"></div>
<div class="t" style="left:16px;top:435px;font-size:13.5px;letter-spacing:0.2px;">39 events.</div>
<div class="t" style="left:93px;top:435px;font-size:13.5px;letter-spacing:0.4px;">Size on disk: 48.94 kibibytes</div>
<svg class="a" style="left:622px;top:463px" width="13" height="13" viewBox="0 0 13 13"><rect x="0" y="0" width="13" height="13" fill="#f6f6f6"/><path d="M2.5 12.5 L12.5 2.5 M6.5 12.5 L12.5 6.5 M10.5 12.5 L12.5 10.5" stroke="#8a8a8a" stroke-width="1"/><path d="M3.5 12.5 L12.5 3.5 M7.5 12.5 L12.5 7.5" stroke="#fff" stroke-width="1"/></svg>
</div>
<div class="win stripe" style="left:122px;top:186px;width:636px;z-index:6">
<div class="a" style="left:0px;top:0px;width:636px;height:21px;border-radius:6px 6px 0 0;background:linear-gradient(#f4f4f4,#e4e4e4 50%,#d4d4d4)"></div>
<div class="a" style="left:0px;top:21px;width:636px;height:1px;background:#858585"></div>
<div class="tl r" style="left:8px;top:4px"></div><div class="tl y" style="left:29px;top:4px"></div><div class="tl g" style="left:50px;top:4px"></div>
<svg class="a" style="left:165px;top:3px" width="16" height="16" viewBox="0 0 16 16"><rect x="6.5" y="0.5" width="9" height="7.5" fill="#fff" stroke="#777"/><rect x="8" y="2" width="6" height="4.5" fill="#3b5ea8"/><rect x="7.5" y="8.5" width="7" height="2.5" fill="#fff" stroke="#777"/><rect x="0.5" y="4.5" width="9" height="7.5" fill="#fff" stroke="#777"/><rect x="2" y="6" width="6" height="4.5" fill="#3b5ea8"/><rect x="0.5" y="12.5" width="8" height="3" fill="#fff" stroke="#777"/></svg>
<div class="t" style="left:186px;top:4px;font-size:14px;letter-spacing:0.12px;">Localhost – 20080408T224345320 (Logging)</div>
<div class="a" style="left:7px;top:38px;width:622px;height:414px;border:1px solid #bdbdbd;border-top-color:#969696;border-bottom-color:#d0d0d0;border-radius:5px;background:linear-gradient(rgba(0,0,0,0.06),rgba(0,0,0,0.02) 20px,rgba(0,0,0,0.02));box-shadow:inset 0 1px 0 rgba(0,0,0,0.05)"></div>
<div class="a" style="left:276px;top:27px;width:82px;height:21px;border:1px solid #3f66a6;border-radius:5px;background:linear-gradient(#d8ebff 0,#a8d0fa 45%,#7fb8f4 52%,#b4dcff 100%);box-shadow:0 1px 1px rgba(0,0,0,0.25)"></div>
<div class="t" style="left:287px;top:30.5px;font-size:13.5px;letter-spacing:0.4px;">Unfiltered</div>
<div class="a" style="left:11px;top:55px;width:615px;height:378px;border:1px solid #a4a4a4;border-top-color:#747474;background:#ececec"></div>
<div class="a" style="left:13px;top:57px;width:611px;height:184px;border:1px solid #b4b4b4;border-top:1px solid #6e6e6e;border-bottom-color:#d4d4d4;background:#fff"></div>
<div class="a" style="left:14px;top:58px;width:593px;height:16px;background:linear-gradient(#ffffff,#f8f8f8 45%,#ededed 55%,#f6f6f6)"></div>
<div class="a" style="left:14px;top:74px;width:593px;height:1px;background:#b4b4b4"></div>
<div class="hd" style="left:15px;width:74px">ID</div>
<div class="a" style="left:88px;top:58px;width:1px;height:17px;background:#c4c4c4"></div>
<div class="hd" style="left:90px;width:73px">Timestamp</div>
<div class="a" style="left:162px;top:58px;width:1px;height:17px;background:#c4c4c4"></div>
<div class="hd" style="left:164px;width:73px">Level</div>
<div class="a" style="left:236px;top:58px;width:1px;height:17px;background:#c4c4c4"></div>
<div class="hd" style="left:238px;width:73px">Logger</div>
<div class="a" style="left:310px;top:58px;width:1px;height:17px;background:#c4c4c4"></div>
<div class="hd" style="left:312px;width:73px">Message</div>
<div class="a" style="left:384px;top:58px;width:1px;height:17px;background:#c4c4c4"></div>
<div class="hd" style="left:386px;width:73px">Throwable</div>
<div class="a" style="left:458px;top:58px;width:1px;height:17px;background:#c4c4c4"></div>
<div class="hd" style="left:460px;width:73px">Thread</div>
<div class="a" style="left:532px;top:58px;width:1px;height:17px;background:#c4c4c4"></div>
<div class="hd" style="left:534px;width:73px">Marker</div>
<div class="a" style="left:606px;top:58px;width:1px;height:17px;background:#c4c4c4"></div>
<div class="a" style="left:14px;top:75px;width:593px;height:165px;overflow:hidden">
<div class="rw" style="left:0px;top:-12px;width:75px;text-align:center">29</div>
<div class="rw" style="left:74.5px;top:-12px;letter-spacing:0.28px">22:44:41....</div>
<div class="a" style="left:149px;top:-12px;width:73px;height:15px;background:#ffff00"></div>
<div class="rw" style="left:149px;top:-12px;width:74px;text-align:center;color:#000;transform:scaleX(0.82);-webkit-text-stroke:0.25px #000">WARN</div>
<div class="rw" style="left:225px;top:-12px;">LoggerEv...</div>
<div class="rw" style="left:297.5px;top:-12px;">ThirdLev...</div>
<div class="rw" style="left:447px;top:-12px;">AWT-Eve...</div>
<div class="rw" style="left:0px;top:4px;width:75px;text-align:center">30</div>
<div class="rw" style="left:74.5px;top:4px;letter-spacing:0.28px">22:44:41....</div>
<div class="a" style="left:149px;top:4px;width:73px;height:15px;background:#ff0000"></div>
<div class="rw" style="left:149px;top:4px;width:74px;text-align:center;color:#ffff00;transform:scaleX(0.82);-webkit-text-stroke:0.5px #ffff00">ERROR</div>
<div class="rw" style="left:225px;top:4px;">LoggerEv...</div>
<div class="rw" style="left:297.5px;top:4px;">A error m...</div>
<div class="rw" style="left:372.5px;top:4px;">RuntimeE...</div>
<div class="rw" style="left:447px;top:4px;">AWT-Eve...</div>
<div class="rw" style="left:0px;top:20px;width:75px;text-align:center">31</div>
<div class="rw" style="left:74.5px;top:20px;letter-spacing:0.28px">22:44:41....</div>
<div class="a" style="left:149px;top:20px;width:73px;height:15px;background:#00ff00"></div>
<div class="rw" style="left:149px;top:20px;width:74px;text-align:center;color:#000;transform:scaleX(0.82);-webkit-text-stroke:0.25px #000">DEBUG</div>
<div class="rw" style="left:225px;top:20px;">LoggerEv...</div>
<div class="rw" style="left:297.5px;top:20px;">Skull! [+2...</div>
<div class="rw" style="left:447px;top:20px;">AWT-Eve...</div>
<div class="rw" style="left:0px;top:36px;width:75px;text-align:center">32</div>
<div class="rw" style="left:74.5px;top:36px;letter-spacing:0.28px">22:44:41....</div>
<div class="a" style="left:149px;top:36px;width:73px;height:15px;background:#ff0000"></div>
<div class="rw" style="left:149px;top:36px;width:74px;text-align:center;color:#ffff00;transform:scaleX(0.82);-webkit-text-stroke:0.5px #ffff00">ERROR</div>
<div class="rw" style="left:225px;top:36px;">LoggerEv...</div>
<div class="rw" style="left:297.5px;top:36px;">The Nort...</div>
<div class="rw" style="left:447px;top:36px;">AWT-Eve...</div>
<div class="rw" style="left:519px;top:36px;width:74px;text-align:center">Hail Eris!!</div>
<div class="rw" style="left:0px;top:52px;width:75px;text-align:center">33</div>
<div class="rw" style="left:74.5px;top:52px;letter-spacing:0.28px">22:44:42....</div>
<div class="rw" style="left:149px;top:52px;width:74px;text-align:center;color:#000;transform:scaleX(0.82);-webkit-text-stroke:0.25px #000">INFO</div>
<div class="rw" style="left:225px;top:52px;">LoggerEv...</div>
<div class="rw" style="left:297.5px;top:52px;">FirstLevel...</div>
<div class="rw" style="left:447px;top:52px;">AWT-Eve...</div>
<div class="rw" style="left:0px;top:68px;width:75px;text-align:center">34</div>
<div class="rw" style="left:74.5px;top:68px;letter-spacing:0.28px">22:44:42....</div>
<div class="a" style="left:149px;top:68px;width:73px;height:15px;background:#ffff00"></div>
<div class="rw" style="left:149px;top:68px;width:74px;text-align:center;color:#000;transform:scaleX(0.82);-webkit-text-stroke:0.25px #000">WARN</div>
<div class="rw" style="left:225px;top:68px;">LoggerEv...</div>
<div class="rw" style="left:297.5px;top:68px;">SecondLe...</div>
<div class="rw" style="left:447px;top:68px;">AWT-Eve...</div>
<div class="rw" style="left:0px;top:84px;width:75px;text-align:center">35</div>
<div class="rw" style="left:74.5px;top:84px;letter-spacing:0.28px">22:44:42....</div>
<div class="a" style="left:149px;top:84px;width:73px;height:15px;background:#ff0000"></div>
<div class="rw" style="left:149px;top:84px;width:74px;text-align:center;color:#ffff00;transform:scaleX(0.82);-webkit-text-stroke:0.5px #ffff00">ERROR</div>
<div class="rw" style="left:225px;top:84px;">LoggerEv...</div>
<div class="rw" style="left:297.5px;top:84px;">Anonymo...</div>
<div class="rw" style="left:447px;top:84px;">AWT-Eve...</div>
<div class="rw" style="left:0px;top:100px;width:75px;text-align:center">36</div>
<div class="rw" style="left:74.5px;top:100px;letter-spacing:0.28px">22:44:43....</div>
<div class="a" style="left:149px;top:100px;width:73px;height:15px;background:#ff0000"></div>
<div class="rw" style="left:149px;top:100px;width:74px;text-align:center;color:#ffff00;transform:scaleX(0.82);-webkit-text-stroke:0.5px #ffff00">ERROR</div>
<div class="rw" style="left:225px;top:100px;">LoggerEv...</div>
<div class="rw" style="left:297.5px;top:100px;">MethodIn...</div>
<div class="rw" style="left:447px;top:100px;">AWT-Eve...</div>
<div class="rw" style="left:0px;top:116px;width:75px;text-align:center">37</div>
<div class="rw" style="left:74.5px;top:116px;letter-spacing:0.28px">22:45:28....</div>
<div class="a" style="left:149px;top:116px;width:73px;height:15px;background:#ff0000"></div>
<div class="rw" style="left:149px;top:116px;width:74px;text-align:center;color:#ffff00;transform:scaleX(0.82);-webkit-text-stroke:0.5px #ffff00">ERROR</div>
<div class="rw" style="left:225px;top:116px;">LoggerEv...</div>
<div class="rw" style="left:297.5px;top:116px;">The Sout...</div>
<div class="rw" style="left:447px;top:116px;">AWT-Eve...</div>
<div class="rw" style="left:519px;top:116px;width:74px;text-align:center">Hail Eris!!</div>
<div class="rw" style="left:0px;top:132px;width:75px;text-align:center">38</div>
<div class="rw" style="left:74.5px;top:132px;letter-spacing:0.28px">22:45:28....</div>
<div class="a" style="left:149px;top:132px;width:73px;height:15px;background:#ff0000"></div>
<div class="rw" style="left:149px;top:132px;width:74px;text-align:center;color:#ffff00;transform:scaleX(0.82);-webkit-text-stroke:0.5px #ffff00">ERROR</div>
<div class="rw" style="left:225px;top:132px;">LoggerEv...</div>
<div class="rw" style="left:297.5px;top:132px;">The Jehov...</div>
<div class="rw" style="left:447px;top:132px;">AWT-Eve...</div>
<div class="rw" style="left:519px;top:132px;width:74px;text-align:center">Hail Eris!!</div>
<div class="a" style="left:1px;top:148px;width:73px;height:15px;background:#fffcb8"></div>
<div class="a" style="left:75px;top:148px;width:73px;height:15px;background:#fffcb8"></div>
<div class="a" style="left:149px;top:148px;width:73px;height:15px;background:#fffcb8"></div>
<div class="a" style="left:223px;top:148px;width:73px;height:15px;background:#fffcb8"></div>
<div class="a" style="left:297px;top:148px;width:73px;height:15px;background:#fffcb8"></div>
<div class="a" style="left:371px;top:148px;width:73px;height:15px;background:#fffcb8"></div>
<div class="a" style="left:445px;top:148px;width:73px;height:15px;background:#fffcb8"></div>
<div class="a" style="left:519px;top:148px;width:73px;height:15px;background:#fffcb8"></div>
<div class="rw" style="left:0px;top:148px;width:75px;text-align:center">39</div>
<div class="rw" style="left:74.5px;top:148px;letter-spacing:0.28px">22:45:29....</div>
<div class="a" style="left:149px;top:148px;width:73px;height:15px;background:#ff0000"></div>
<div class="rw" style="left:149px;top:148px;width:74px;text-align:center;color:#ffff00;transform:scaleX(0.82);-webkit-text-stroke:0.5px #ffff00">ERROR</div>
<div class="rw" style="left:225px;top:148px;">LoggerEv...</div>
<div class="rw" style="left:297.5px;top:148px;">The Shiit...</div>
<div class="rw" style="left:447px;top:148px;">AWT-Eve...</div>
<div class="rw" style="left:519px;top:148px;width:74px;text-align:center">Hail Eris!!</div>
</div>
<div class="vtr" style="left:607px;top:75px;height:165px"></div>
<div class="a" style="left:607px;top:75px;width:15px;height:6px;background:linear-gradient(to right,#e8e8e8,#f8f8f8 50%,#eeeeee)"></div>
<div class="a" style="left:607px;top:80px;width:15px;height:10px;border-radius:7px 7px 0 0;border-top:1px solid #c4c4c4;background:linear-gradient(to bottom,#d8d8d8,rgba(255,255,255,0))"></div>
<div class="a" style="left:607px;top:209px;width:15px;height:31px;background:linear-gradient(to right,#e6e6e6,#fbfbfb 50%,#f0f0f0)"></div>
<div class="a" style="left:607px;top:205px;width:15px;height:5px;border-radius:0 0 7px 7px;border-bottom:1px solid #c8c8c8;background:linear-gradient(to right,#e2e2e2,#fafafa 50%,#ececec)"></div>
<div class="a" style="left:607px;top:222px;width:15px;height:1px;background:#d4d4d4"></div>
<div class="arr up" style="left:611px;top:211px"></div>
<div class="arr dn" style="left:611px;top:228px"></div>
<div class="kva" style="left:608px;top:178px;width:13px;height:29px"></div>
<div class="a" style="left:13px;top:241px;width:611px;height:9px;background:linear-gradient(#f2f2f2,#e6e6e6)"></div>
<svg class="a" style="left:314px;top:241px" width="10" height="9"><path d="M1.8 6.5 L4.5 3.6 L7.2 6.5" fill="none" stroke="#333" stroke-width="1.6"/></svg>
<div class="arr up" style="left:603px;top:243px;border-bottom:6px solid #a8a8a8"></div>
<div class="arr dn" style="left:614px;top:243px;border-top:6px solid #a8a8a8"></div>
<div class="a" style="left:13px;top:250px;width:611px;height:181px;border:1px solid #b4b4b4;border-top:1px solid #5e5e5e;background:#fff;box-shadow:inset 0 1px 0 #c8c8c8"></div>
<div class="a" style="left:25px;top:262px;width:95px;height:128px;border:1px solid #000;background:#cacaca;box-shadow:inset 0 0 0 1px #f0f0f0"></div>
<div class="t" style="left:27px;top:317.5px;font-size:16px;font-weight:700;font-family:'Liberation Serif', serif;">Message</div>
<div class="a" style="left:122px;top:262px;width:485px;height:128px;border:1px solid #000;border-right:0;background:#fff"></div>
<div class="t" style="left:124px;top:277.7px;font-size:13.33px;font-family:'Liberation Mono', monospace;-webkit-text-stroke:0">The Shiite Fire-worshipper Fellowship</div>
<div class="t" style="left:124px;top:291.7px;font-size:13.33px;font-family:'Liberation Mono', monospace;-webkit-text-stroke:0">rejects the notion that the Athanasian</div>
<div class="t" style="left:124px;top:305.7px;font-size:13.33px;font-family:'Liberation Mono', monospace;-webkit-text-stroke:0">creed predicts the eventual supremacy of</div>
<div class="t" style="left:124px;top:319.7px;font-size:13.33px;font-family:'Liberation Mono', monospace;-webkit-text-stroke:0">a certain absent-minded, father figure</div>
<div class="t" style="left:124px;top:333.7px;font-size:13.33px;font-family:'Liberation Mono', monospace;-webkit-text-stroke:0">ex-President, but preaches that soon we</div>
<div class="t" style="left:124px;top:347.7px;font-size:13.33px;font-family:'Liberation Mono', monospace;-webkit-text-stroke:0">shall see the face of Jesus in a bowl of</div>
<div class="t" style="left:124px;top:361.7px;font-size:13.33px;font-family:'Liberation Mono', monospace;-webkit-text-stroke:0">spaghetti.</div>
<div class="a" style="left:25px;top:392px;width:95px;height:22px;border:1px solid #000;background:#ececec"></div>
<div class="t" style="left:27px;top:395px;font-size:16px;font-weight:700;font-family:'Liberation Serif', serif;">Level</div>
<div class="a" style="left:122px;top:392px;width:485px;height:22px;border:1px solid #000;border-right:0;background:#dcdcdc"></div>
<div class="t" style="left:123px;top:394px;font-size:16.5px;font-family:'Liberation Serif', serif;">ERROR</div>
<div class="vtr" style="left:607px;top:251px;height:162px"></div>
<div class="a" style="left:607px;top:251px;width:15px;height:6px;background:linear-gradient(to right,#e8e8e8,#f8f8f8 50%,#eeeeee)"></div>
<div class="a" style="left:607px;top:256px;width:15px;height:10px;border-radius:7px 7px 0 0;border-top:1px solid #c4c4c4;background:linear-gradient(to bottom,#d8d8d8,rgba(255,255,255,0))"></div>
<div class="a" style="left:607px;top:382px;width:15px;height:31px;background:linear-gradient(to right,#e6e6e6,#fbfbfb 50%,#f0f0f0)"></div>
<div class="a" style="left:607px;top:378px;width:15px;height:5px;border-radius:0 0 7px 7px;border-bottom:1px solid #c8c8c8;background:linear-gradient(to right,#e2e2e2,#fafafa 50%,#ececec)"></div>
<div class="a" style="left:607px;top:397px;width:15px;height:1px;background:#d4d4d4"></div>
<div class="arr up" style="left:611px;top:386px"></div>
<div class="arr dn" style="left:611px;top:402px"></div>
<div class="kva" style="left:608px;top:259px;width:13px;height:36px"></div>
<div class="htr" style="left:14px;top:414px;width:593px"></div>
<div class="a" style="left:14px;top:414px;width:6px;height:15px;background:linear-gradient(to bottom,#e8e8e8,#f8f8f8 50%,#eeeeee)"></div>
<div class="a" style="left:575px;top:414px;width:32px;height:15px;background:linear-gradient(to bottom,#e6e6e6,#fbfbfb 50%,#f0f0f0)"></div>
<div class="a" style="left:570px;top:414px;width:6px;height:15px;border-radius:0 7px 7px 0;border-right:1px solid #c8c8c8;background:linear-gradient(to bottom,#e2e2e2,#fafafa 50%,#ececec)"></div>
<div class="a" style="left:590px;top:414px;width:1px;height:15px;background:#d4d4d4"></div>
<div class="lf" style="left:579px;top:418px"></div>
<div class="rt" style="left:596px;top:418px"></div>
<div class="a" style="left:15px;top:414px;width:10px;height:15px;border:1px solid #b8b8b8;border-right:0;background:linear-gradient(to bottom,#ececec,#fafafa 50%,#f0f0f0)"></div>
<div class="kha" style="left:21px;top:415px;width:504px;height:13px"></div>
<div class="a" style="left:607px;top:414px;width:16px;height:15px;background:#fff"></div>
<div class="t" style="left:16px;top:435px;font-size:13.5px;letter-spacing:0.2px;">39 events.</div>
<div class="t" style="left:93px;top:435px;font-size:13.5px;letter-spacing:0.4px;">Size on disk: 48.94 kibibytes</div>
<svg class="a" style="left:622px;top:463px" width="13" height="13" viewBox="0 0 13 13"><rect x="0" y="0" width="13" height="13" fill="#f6f6f6"/><path d="M2.5 12.5 L12.5 2.5 M6.5 12.5 L12.5 6.5 M10.5 12.5 L12.5 10.5" stroke="#8a8a8a" stroke-width="1"/><path d="M3.5 12.5 L12.5 3.5 M7.5 12.5 L12.5 7.5" stroke="#fff" stroke-width="1"/></svg>
</div>
<div class="a" style="left:0px;top:716px;width:1024px;height:26px;background:repeating-linear-gradient(to bottom,#f0f0f0 0,#f0f0f0 2px,#eaeaea 2px,#eaeaea 4px);border-top:1px solid #d8d8d8;z-index:10"></div>
<div class="a" style="left:0;top:0;width:1024px;height:742px;z-index:11;pointer-events:none">
<div class="t" style="left:5px;top:722.5px;font-size:14px;letter-spacing:0.11px;-webkit-text-stroke:0.1px #000">6 active connections.</div>
<div class="a" style="left:936px;top:716px;width:87px;height:26px;border:1px solid #b0b0b0;background:#fff"></div>
<div class="a" style="left:938px;top:718px;width:23px;height:22px;background:linear-gradient(#00ee00 85%,#00a000)"></div>
<div class="a" style="left:961px;top:718px;width:26px;height:22px;background:linear-gradient(#ffff50 85%,#c8b030)"></div>
<div class="t" style="left:949px;top:723px;font-size:13.5px;letter-spacing:0.3px;text-shadow:0 0 2px #fff,0 0 2px #fff">17.12 MiB</div>
<svg class="a" style="left:1010px;top:728px" width="13" height="13" viewBox="0 0 13 13"><rect x="0" y="0" width="13" height="13" fill="#f6f6f6"/><path d="M2.5 12.5 L12.5 2.5 M6.5 12.5 L12.5 6.5 M10.5 12.5 L12.5 10.5" stroke="#8a8a8a" stroke-width="1"/><path d="M3.5 12.5 L12.5 3.5 M7.5 12.5 L12.5 7.5" stroke="#fff" stroke-width="1"/></svg>
<div class="a" style="left:1009px;top:727px;width:1px;height:15px;background:#ddd"></div>
<div class="a" style="left:1009px;top:727px;width:15px;height:1px;background:#ddd"></div>
</div>
</body></html>
